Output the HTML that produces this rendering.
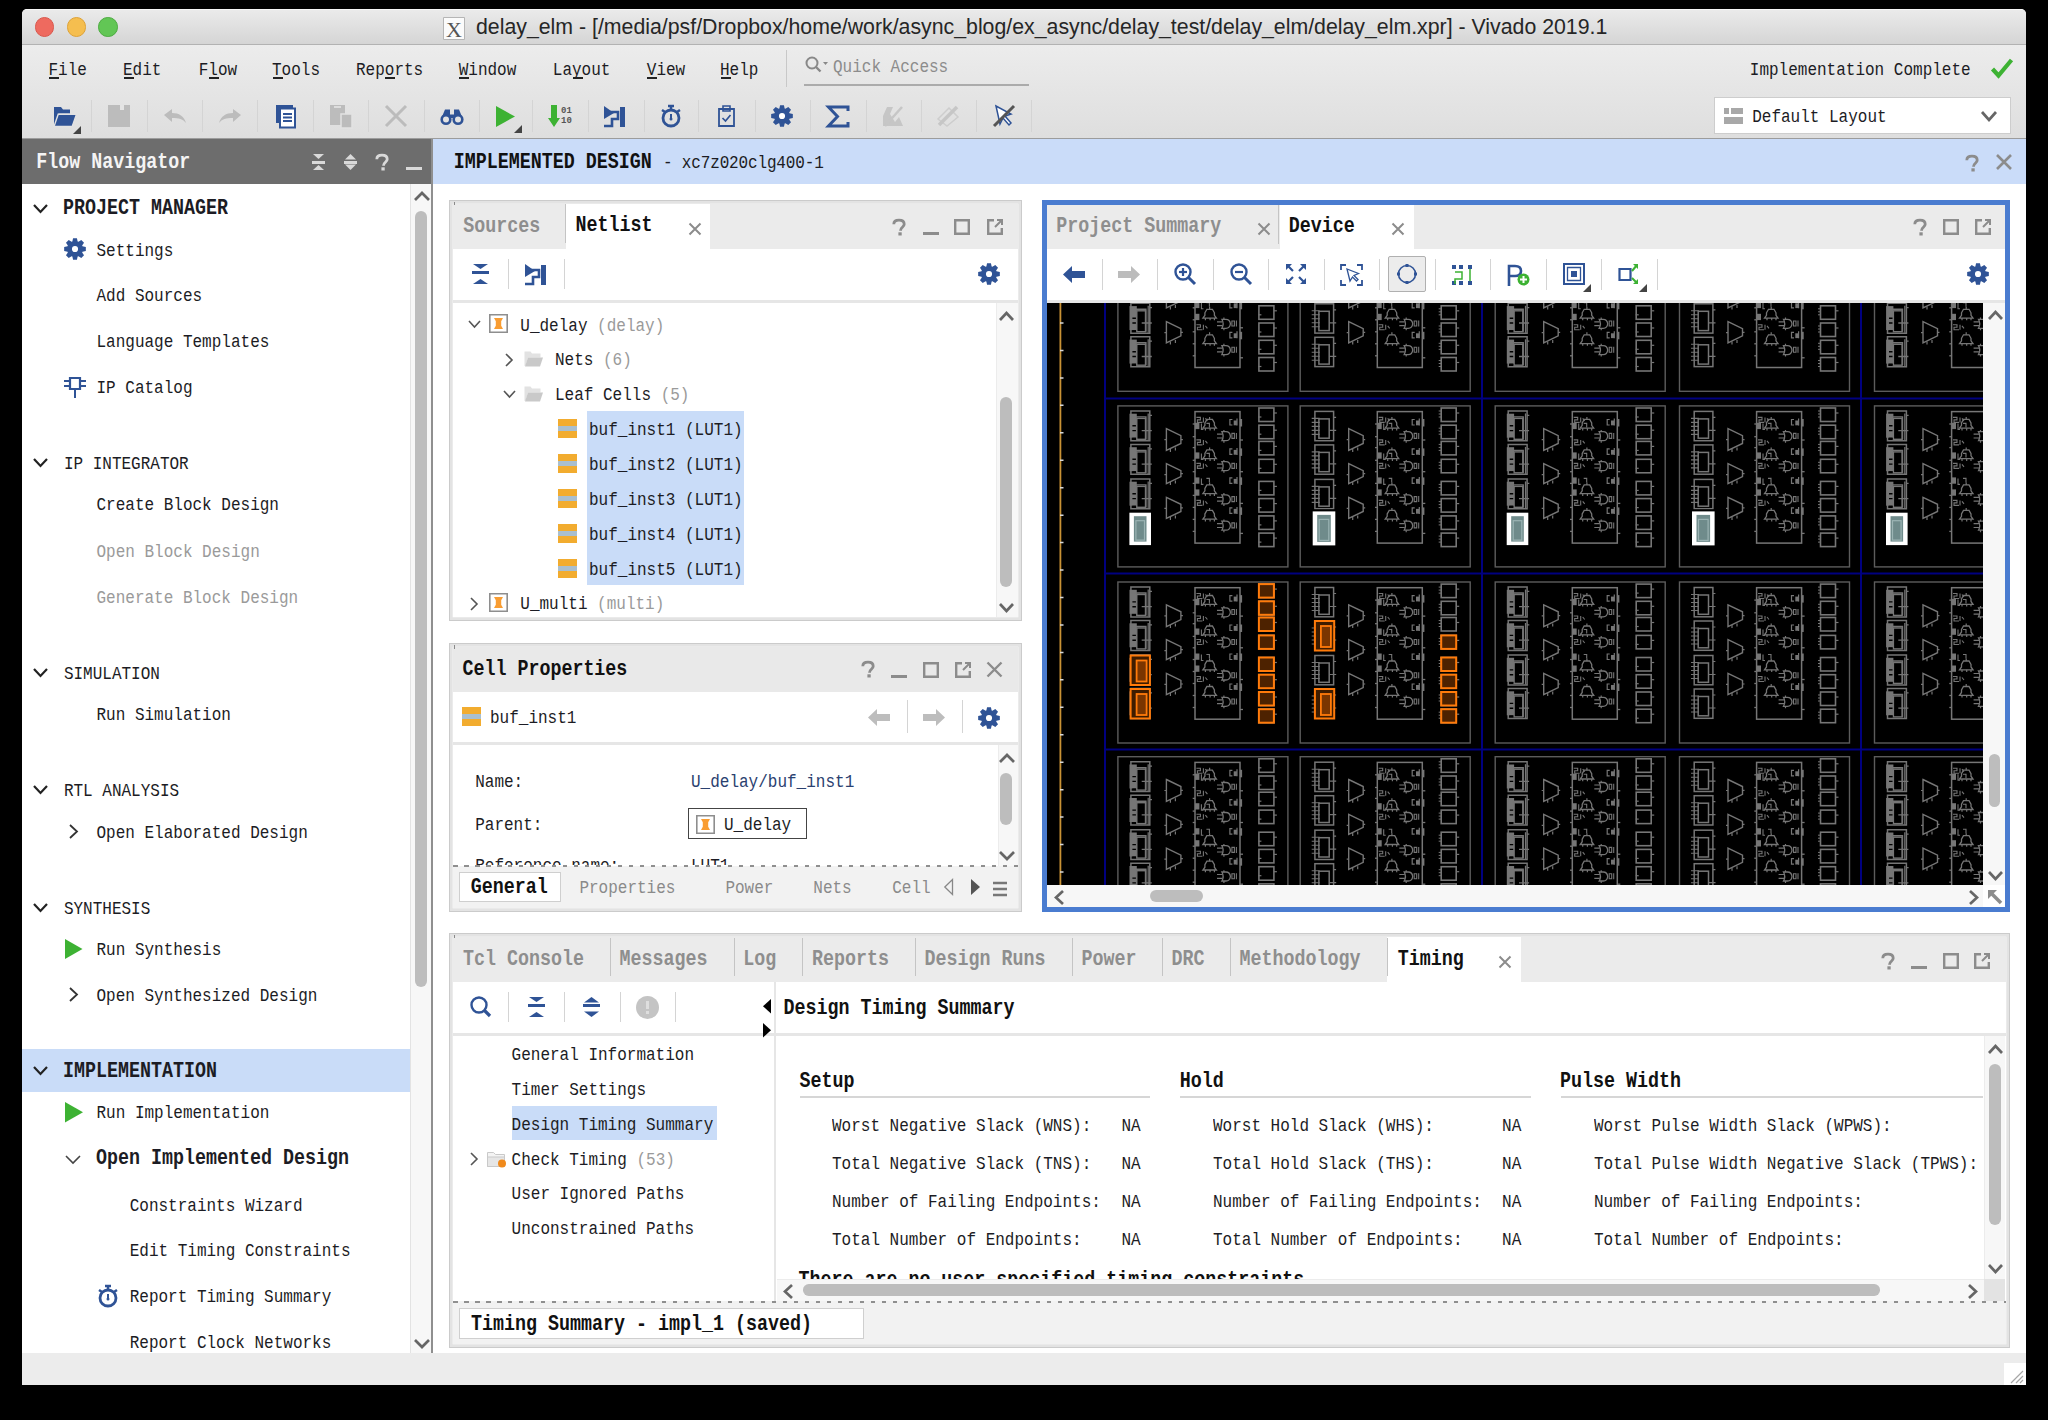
<!DOCTYPE html><html><head><meta charset="utf-8"><title>Vivado</title><style>
*{margin:0;padding:0;box-sizing:border-box}
html,body{width:2048px;height:1420px;overflow:hidden;background:#000}
body{position:relative}
div{position:absolute}
.t{white-space:pre;font-family:"Liberation Mono",monospace;font-size:16px;line-height:20px;transform:scaleY(1.2);transform-origin:0 14px}
.t.b{font-weight:bold;font-size:18.33px;transform:scaleY(1.18)}
svg{position:absolute;overflow:visible}
</style></head><body>
<div style="position:absolute;left:22px;top:9px;width:2004px;height:1376px;background:#ececec;border-radius:5px 5px 0 0"></div>
<div style="position:absolute;left:22px;top:9px;width:2004px;height:35px;background:linear-gradient(#ebebeb,#d5d5d5);border-radius:5px 5px 0 0"></div>
<div style="position:absolute;left:26px;top:9px;width:1996px;height:1px;background:#f6f6f6"></div>
<div style="position:absolute;left:22px;top:44px;width:2004px;height:1px;background:#b2b2b2"></div>
<div style="position:absolute;left:22px;top:45px;width:2004px;height:93px;background:linear-gradient(#ececec,#dedede)"></div>
<div style="position:absolute;left:22px;top:138px;width:2004px;height:1px;background:#9c9c9c"></div>
<div style="position:absolute;left:22px;top:139px;width:409px;height:45px;background:#6d6d6d"></div>
<div style="position:absolute;left:22px;top:184px;width:409px;height:1169px;background:#fff"></div>
<div style="position:absolute;left:410px;top:184px;width:21px;height:1169px;background:#f7f7f7;border-left:1px solid #e3e3e3"></div>
<div style="position:absolute;left:431px;top:139px;width:2px;height:1214px;background:#8f8f8f"></div>
<div style="position:absolute;left:433px;top:139px;width:1593px;height:45px;background:#cadcf9"></div>
<div style="position:absolute;left:433px;top:184px;width:1593px;height:1169px;background:#fff"></div>
<div style="position:absolute;left:22px;top:1353px;width:2004px;height:32px;background:#ececec"></div>
<div style="position:absolute;left:449px;top:200px;width:573px;height:421px;background:#fff;border:1.3px solid #cbcbcb;box-shadow:inset 0 0 0 2.7px #e3e3e3"></div>
<div style="position:absolute;left:453px;top:204px;width:565px;height:45px;background:#ebebeb"></div>
<div style="position:absolute;left:566px;top:204px;width:144px;height:45px;background:#fff"></div>
<div style="position:absolute;left:565px;top:204px;width:1px;height:39px;background:#c4c4c4"></div>
<div style="position:absolute;left:453px;top:300px;width:565px;height:3px;background:#e6e6e6"></div>
<div style="position:absolute;left:996px;top:303px;width:22px;height:314px;background:#f7f7f7;border-left:1px solid #ececec"></div>
<div style="position:absolute;left:587px;top:411px;width:157px;height:174px;background:#c9dcf8"></div>
<div style="position:absolute;left:449px;top:643px;width:573px;height:269px;background:#fff;border:1.3px solid #cbcbcb;box-shadow:inset 0 0 0 2.7px #e3e3e3"></div>
<div style="position:absolute;left:453px;top:647px;width:565px;height:45px;background:#e9e9e9"></div>
<div style="position:absolute;left:453px;top:742px;width:565px;height:3px;background:#e6e6e6"></div>
<div style="position:absolute;left:998px;top:745px;width:20px;height:121px;background:#f7f7f7;border-left:1px solid #ececec"></div>
<div style="position:absolute;left:453px;top:866px;width:565px;height:42px;background:#f2f2f2"></div>
<div style="position:absolute;left:453px;top:864.5px;width:565px;height:2px;background:repeating-linear-gradient(90deg,#8f8f8f 0 4.5px,transparent 4.5px 11px)"></div>
<div style="position:absolute;left:459px;top:872px;width:102px;height:30px;background:#fff;border:1px solid #cfcfcf"></div>
<div style="position:absolute;left:1042px;top:200px;width:968px;height:712px;background:#fff;border:5px solid #4a7cd0"></div>
<div style="position:absolute;left:1047px;top:205px;width:958px;height:44px;background:#ebebeb"></div>
<div style="position:absolute;left:1280px;top:205px;width:134px;height:44px;background:#fff"></div>
<div style="position:absolute;left:1278px;top:205px;width:1px;height:39px;background:#c4c4c4"></div>
<div style="position:absolute;left:1047px;top:300px;width:958px;height:3px;background:#e6e6e6"></div>
<div style="position:absolute;left:1047px;top:303px;width:936px;height:582px;background:#000"></div>
<svg style="left:1047px;top:303px;overflow:hidden" width="936" height="582" viewBox="1047 303 936 582"><defs><g id="tA"><rect x="0.5" y="0.5" width="170" height="161" fill="none" stroke="#5c5c5c" stroke-width="1.4"/><path d="M49 23.3L63.5 30.3V38.1L49 45.1z" fill="none" stroke="#767676" stroke-width="1.4"/><path d="M47 34.3h2M63.5 34.2h2M53 43.6v3M58 42.1v3" stroke="#767676" stroke-width="1.2"/><path d="M49 58.2L63.5 65.2V71.2L49 78.2z" fill="none" stroke="#767676" stroke-width="1.4"/><path d="M47 69.2h2M63.5 68.2h2M53 76.7v3M58 75.2v3" stroke="#767676" stroke-width="1.2"/><path d="M49 91.9L63.5 98.9V106.1L49 113.1z" fill="none" stroke="#767676" stroke-width="1.4"/><path d="M47 102.9h2M63.5 102.5h2M53 111.6v3M58 110.1v3" stroke="#767676" stroke-width="1.2"/><rect x="77.6" y="6.2" width="45" height="131.5" fill="none" stroke="#767676" stroke-width="1.5"/><path d="M75.3 18.6h2.5" stroke="#767676" stroke-width="1.3"/><path d="M75.3 31.3h2.5" stroke="#767676" stroke-width="1.3"/><path d="M75.3 42.2h2.5" stroke="#767676" stroke-width="1.3"/><path d="M75.3 54.9h2.5" stroke="#767676" stroke-width="1.3"/><path d="M75.3 66.3h2.5" stroke="#767676" stroke-width="1.3"/><path d="M75.3 78h2.5" stroke="#767676" stroke-width="1.3"/><path d="M75.3 90h2.5" stroke="#767676" stroke-width="1.3"/><path d="M75.3 102h2.5" stroke="#767676" stroke-width="1.3"/><path d="M75.3 114h2.5" stroke="#767676" stroke-width="1.3"/><path d="M75.3 126h2.5" stroke="#767676" stroke-width="1.3"/><path d="M122.6 34.6h3" stroke="#767676" stroke-width="1.3"/><path d="M122.6 66.3h3" stroke="#767676" stroke-width="1.3"/><path d="M122.6 98h3" stroke="#767676" stroke-width="1.3"/><path d="M122.6 128h3" stroke="#767676" stroke-width="1.3"/><path d="M85.5 22.8H99L97 20V17.5L95 14H89.5L87.5 17.5V20z" fill="none" stroke="#767676" stroke-width="1.3"/><path d="M92.2 11.5v2.5M88 22.8v2.2M92.7 22.8v2.2M97 22.8v2.2" stroke="#767676" stroke-width="1.2"/><path d="M85.5 53.3H99L97 50.5V48.0L95 44.5H89.5L87.5 48.0V50.5z" fill="none" stroke="#767676" stroke-width="1.3"/><path d="M92.2 42.0v2.5M88 53.3v2.2M92.7 53.3v2.2M97 53.3v2.2" stroke="#767676" stroke-width="1.2"/><path d="M85.5 88.3H99L97 85.5V83.0L95 79.5H89.5L87.5 83.0V85.5z" fill="none" stroke="#767676" stroke-width="1.3"/><path d="M92.2 77.0v2.5M88 88.3v2.2M92.7 88.3v2.2M97 88.3v2.2" stroke="#767676" stroke-width="1.2"/><path d="M85.5 113.8H99L97 111V108.5L95 105H89.5L87.5 108.5V111z" fill="none" stroke="#767676" stroke-width="1.3"/><path d="M92.2 102.5v2.5M88 113.8v2.2M92.7 113.8v2.2M97 113.8v2.2" stroke="#767676" stroke-width="1.2"/><path d="M104.5 26.3Q107 30.8 104.5 35.3H108.5Q112.5 35.3 113 30.8Q112.5 26.3 108.5 26.3z" fill="none" stroke="#767676" stroke-width="1.3"/><path d="M99.6 28.8h5.5M99.6 32.6h5.5M106.5 24.5v2M106.5 35.3v2" stroke="#767676" stroke-width="1.2"/><path d="M114.5 28.0h2.5v5h-2.5zM119 27.5v6" fill="none" stroke="#767676" stroke-width="1.1"/><path d="M104.5 56.3Q107 60.8 104.5 65.3H108.5Q112.5 65.3 113 60.8Q112.5 56.3 108.5 56.3z" fill="none" stroke="#767676" stroke-width="1.3"/><path d="M99.6 58.8h5.5M99.6 62.6h5.5M106.5 54.5v2M106.5 65.3v2" stroke="#767676" stroke-width="1.2"/><path d="M114.5 58.0h2.5v5h-2.5zM119 57.5v6" fill="none" stroke="#767676" stroke-width="1.1"/><path d="M104.5 89.5Q107 94.0 104.5 98.5H108.5Q112.5 98.5 113 94.0Q112.5 89.5 108.5 89.5z" fill="none" stroke="#767676" stroke-width="1.3"/><path d="M99.6 92.0h5.5M99.6 95.8h5.5M106.5 87.7v2M106.5 98.5v2" stroke="#767676" stroke-width="1.2"/><path d="M114.5 91.2h2.5v5h-2.5zM119 90.7v6" fill="none" stroke="#767676" stroke-width="1.1"/><path d="M104.5 115.8Q107 120.3 104.5 124.8H108.5Q112.5 124.8 113 120.3Q112.5 115.8 108.5 115.8z" fill="none" stroke="#767676" stroke-width="1.3"/><path d="M99.6 118.3h5.5M99.6 122.1h5.5M106.5 114v2M106.5 124.8v2" stroke="#767676" stroke-width="1.2"/><path d="M114.5 117.5h2.5v5h-2.5zM119 117v6" fill="none" stroke="#767676" stroke-width="1.1"/><path d="M115 14.1h-2.5v5.5h2.5" fill="none" stroke="#767676" stroke-width="1.2"/><rect x="116.3" y="15.1" width="3.2" height="4.8" fill="#767676"/><path d="M119.6 13.1v7" stroke="#767676" stroke-width="1.2"/><rect x="122.5" y="13.6" width="2.2" height="7.5" fill="#767676"/><path d="M115 43.5h-2.5v5.5h2.5" fill="none" stroke="#767676" stroke-width="1.2"/><rect x="116.3" y="44.5" width="3.2" height="4.8" fill="#767676"/><path d="M119.6 42.5v7" stroke="#767676" stroke-width="1.2"/><rect x="122.5" y="43" width="2.2" height="7.5" fill="#767676"/><path d="M115 72.5h-2.5v5.5h2.5" fill="none" stroke="#767676" stroke-width="1.2"/><rect x="116.3" y="73.5" width="3.2" height="4.8" fill="#767676"/><path d="M119.6 71.5v7" stroke="#767676" stroke-width="1.2"/><rect x="122.5" y="72" width="2.2" height="7.5" fill="#767676"/><path d="M115 102.5h-2.5v5.5h2.5" fill="none" stroke="#767676" stroke-width="1.2"/><rect x="116.3" y="103.5" width="3.2" height="4.8" fill="#767676"/><path d="M119.6 101.5v7" stroke="#767676" stroke-width="1.2"/><rect x="122.5" y="102" width="2.2" height="7.5" fill="#767676"/><rect x="77.6" y="17.4" width="4.4" height="6.3" fill="#767676"/><rect x="77.6" y="47" width="4.4" height="6.3" fill="#767676"/><rect x="77.6" y="72" width="4.4" height="6.3" fill="#767676"/><rect x="77.6" y="84" width="4.4" height="6.3" fill="#767676"/><path d="M79 12h4v2.5h-3v2.5h5M86 12v5M88 13l2 2.5" fill="none" stroke="#767676" stroke-width="1.1"/><path d="M79 34.5h4v2.5h-3v2.5h5M86 34.5v5M88 35.5l2 2.5" fill="none" stroke="#767676" stroke-width="1.1"/><path d="M79 58h4v2.5h-3v2.5h5M86 58v5M88 59l2 2.5" fill="none" stroke="#767676" stroke-width="1.1"/><path d="M79 95h4v2.5h-3v2.5h5M86 95v5M88 96l2 2.5" fill="none" stroke="#767676" stroke-width="1.1"/><path d="M84 18v6h2M89 18h3v4" fill="none" stroke="#767676" stroke-width="1.1"/><path d="M84 48v6h2M89 48h3v4" fill="none" stroke="#767676" stroke-width="1.1"/><path d="M84 73v6h2M89 73h3v4" fill="none" stroke="#767676" stroke-width="1.1"/><path d="M13.5 5.5H32.4V35.4H13.5z" fill="none" stroke="#767676" stroke-width="1.5"/><rect x="12.1" y="8.3" width="7.3" height="24" fill="#767676"/><path d="M14 11.5H28.5V34.0" fill="none" stroke="#767676" stroke-width="1.4"/><rect x="19.4" y="13.0" width="8.7" height="20.9" fill="none" stroke="#767676" stroke-width="1.4"/><path d="M30.8 8.0V35.0" stroke="#767676" stroke-width="1.2"/><path d="M15 20.4h3.5M15 25.2h3.5M15 33.1h3.5" stroke="#000" stroke-width="1.4"/><path d="M32.4 9.9h2.2M24.3 25.2h10.1" stroke="#767676" stroke-width="1.3"/><path d="M13.5 39.0H32.4V68.9H13.5z" fill="none" stroke="#767676" stroke-width="1.5"/><rect x="12.1" y="41.8" width="7.3" height="24" fill="#767676"/><path d="M14 45.0H28.5V67.5" fill="none" stroke="#767676" stroke-width="1.4"/><rect x="19.4" y="46.5" width="8.7" height="20.9" fill="none" stroke="#767676" stroke-width="1.4"/><path d="M30.8 41.5V68.5" stroke="#767676" stroke-width="1.2"/><path d="M15 53.9h3.5M15 58.7h3.5M15 66.6h3.5" stroke="#000" stroke-width="1.4"/><path d="M32.4 43.4h2.2M24.3 58.7h10.1" stroke="#767676" stroke-width="1.3"/><path d="M13.5 73.5H32.4V103.4H13.5z" fill="none" stroke="#767676" stroke-width="1.5"/><rect x="12.1" y="76.3" width="7.3" height="24" fill="#767676"/><path d="M14 79.5H28.5V102.0" fill="none" stroke="#767676" stroke-width="1.4"/><rect x="19.4" y="81.0" width="8.7" height="20.9" fill="none" stroke="#767676" stroke-width="1.4"/><path d="M30.8 76.0V103.0" stroke="#767676" stroke-width="1.2"/><path d="M15 88.4h3.5M15 93.2h3.5M15 101.1h3.5" stroke="#000" stroke-width="1.4"/><path d="M32.4 77.9h2.2M24.3 93.2h10.1" stroke="#767676" stroke-width="1.3"/><path d="M13.5 107.0H32.4V136.9H13.5z" fill="none" stroke="#767676" stroke-width="1.5"/><rect x="12.1" y="109.8" width="7.3" height="24" fill="#767676"/><path d="M14 113.0H28.5V135.5" fill="none" stroke="#767676" stroke-width="1.4"/><rect x="19.4" y="114.5" width="8.7" height="20.9" fill="none" stroke="#767676" stroke-width="1.4"/><path d="M30.8 109.5V136.5" stroke="#767676" stroke-width="1.2"/><path d="M15 121.9h3.5M15 126.7h3.5M15 134.6h3.5" stroke="#000" stroke-width="1.4"/><path d="M32.4 111.4h2.2M24.3 126.7h10.1" stroke="#767676" stroke-width="1.3"/><rect x="141.5" y="2.6" width="15" height="13.5" fill="none" stroke="#767676" stroke-width="1.6"/><path d="M156.5 7.6h3" stroke="#767676" stroke-width="1.2"/><path d="M141 11.6h3" stroke="#767676" stroke-width="1.2"/><rect x="141.5" y="19.8" width="15" height="13.5" fill="none" stroke="#767676" stroke-width="1.6"/><path d="M156.5 24.8h3" stroke="#767676" stroke-width="1.2"/><path d="M141 28.8h3" stroke="#767676" stroke-width="1.2"/><rect x="141.5" y="36" width="15" height="13.5" fill="none" stroke="#767676" stroke-width="1.6"/><path d="M156.5 41h3" stroke="#767676" stroke-width="1.2"/><path d="M141 45h3" stroke="#767676" stroke-width="1.2"/><rect x="141.5" y="53.9" width="15" height="13.5" fill="none" stroke="#767676" stroke-width="1.6"/><path d="M156.5 58.9h3" stroke="#767676" stroke-width="1.2"/><path d="M141 62.9h3" stroke="#767676" stroke-width="1.2"/><rect x="141.5" y="76" width="15" height="13.5" fill="none" stroke="#767676" stroke-width="1.6"/><path d="M156.5 81h3" stroke="#767676" stroke-width="1.2"/><path d="M141 85h3" stroke="#767676" stroke-width="1.2"/><rect x="141.5" y="93.2" width="15" height="13.5" fill="none" stroke="#767676" stroke-width="1.6"/><path d="M156.5 98.2h3" stroke="#767676" stroke-width="1.2"/><path d="M141 102.2h3" stroke="#767676" stroke-width="1.2"/><rect x="141.5" y="110.5" width="15" height="13.5" fill="none" stroke="#767676" stroke-width="1.6"/><path d="M156.5 115.5h3" stroke="#767676" stroke-width="1.2"/><path d="M141 119.5h3" stroke="#767676" stroke-width="1.2"/><rect x="141.5" y="127.7" width="15" height="13.5" fill="none" stroke="#767676" stroke-width="1.6"/><path d="M156.5 132.7h3" stroke="#767676" stroke-width="1.2"/><path d="M141 136.7h3" stroke="#767676" stroke-width="1.2"/></g><g id="tB"><rect x="0.5" y="0.5" width="170" height="161" fill="none" stroke="#5c5c5c" stroke-width="1.4"/><path d="M49 23.3L63.5 30.3V38.1L49 45.1z" fill="none" stroke="#767676" stroke-width="1.4"/><path d="M47 34.3h2M63.5 34.2h2M53 43.6v3M58 42.1v3" stroke="#767676" stroke-width="1.2"/><path d="M49 58.2L63.5 65.2V71.2L49 78.2z" fill="none" stroke="#767676" stroke-width="1.4"/><path d="M47 69.2h2M63.5 68.2h2M53 76.7v3M58 75.2v3" stroke="#767676" stroke-width="1.2"/><path d="M49 91.9L63.5 98.9V106.1L49 113.1z" fill="none" stroke="#767676" stroke-width="1.4"/><path d="M47 102.9h2M63.5 102.5h2M53 111.6v3M58 110.1v3" stroke="#767676" stroke-width="1.2"/><rect x="77.6" y="6.2" width="45" height="131.5" fill="none" stroke="#767676" stroke-width="1.5"/><path d="M75.3 18.6h2.5" stroke="#767676" stroke-width="1.3"/><path d="M75.3 31.3h2.5" stroke="#767676" stroke-width="1.3"/><path d="M75.3 42.2h2.5" stroke="#767676" stroke-width="1.3"/><path d="M75.3 54.9h2.5" stroke="#767676" stroke-width="1.3"/><path d="M75.3 66.3h2.5" stroke="#767676" stroke-width="1.3"/><path d="M75.3 78h2.5" stroke="#767676" stroke-width="1.3"/><path d="M75.3 90h2.5" stroke="#767676" stroke-width="1.3"/><path d="M75.3 102h2.5" stroke="#767676" stroke-width="1.3"/><path d="M75.3 114h2.5" stroke="#767676" stroke-width="1.3"/><path d="M75.3 126h2.5" stroke="#767676" stroke-width="1.3"/><path d="M122.6 34.6h3" stroke="#767676" stroke-width="1.3"/><path d="M122.6 66.3h3" stroke="#767676" stroke-width="1.3"/><path d="M122.6 98h3" stroke="#767676" stroke-width="1.3"/><path d="M122.6 128h3" stroke="#767676" stroke-width="1.3"/><path d="M85.5 22.8H99L97 20V17.5L95 14H89.5L87.5 17.5V20z" fill="none" stroke="#767676" stroke-width="1.3"/><path d="M92.2 11.5v2.5M88 22.8v2.2M92.7 22.8v2.2M97 22.8v2.2" stroke="#767676" stroke-width="1.2"/><path d="M85.5 53.3H99L97 50.5V48.0L95 44.5H89.5L87.5 48.0V50.5z" fill="none" stroke="#767676" stroke-width="1.3"/><path d="M92.2 42.0v2.5M88 53.3v2.2M92.7 53.3v2.2M97 53.3v2.2" stroke="#767676" stroke-width="1.2"/><path d="M85.5 88.3H99L97 85.5V83.0L95 79.5H89.5L87.5 83.0V85.5z" fill="none" stroke="#767676" stroke-width="1.3"/><path d="M92.2 77.0v2.5M88 88.3v2.2M92.7 88.3v2.2M97 88.3v2.2" stroke="#767676" stroke-width="1.2"/><path d="M85.5 113.8H99L97 111V108.5L95 105H89.5L87.5 108.5V111z" fill="none" stroke="#767676" stroke-width="1.3"/><path d="M92.2 102.5v2.5M88 113.8v2.2M92.7 113.8v2.2M97 113.8v2.2" stroke="#767676" stroke-width="1.2"/><path d="M104.5 26.3Q107 30.8 104.5 35.3H108.5Q112.5 35.3 113 30.8Q112.5 26.3 108.5 26.3z" fill="none" stroke="#767676" stroke-width="1.3"/><path d="M99.6 28.8h5.5M99.6 32.6h5.5M106.5 24.5v2M106.5 35.3v2" stroke="#767676" stroke-width="1.2"/><path d="M114.5 28.0h2.5v5h-2.5zM119 27.5v6" fill="none" stroke="#767676" stroke-width="1.1"/><path d="M104.5 56.3Q107 60.8 104.5 65.3H108.5Q112.5 65.3 113 60.8Q112.5 56.3 108.5 56.3z" fill="none" stroke="#767676" stroke-width="1.3"/><path d="M99.6 58.8h5.5M99.6 62.6h5.5M106.5 54.5v2M106.5 65.3v2" stroke="#767676" stroke-width="1.2"/><path d="M114.5 58.0h2.5v5h-2.5zM119 57.5v6" fill="none" stroke="#767676" stroke-width="1.1"/><path d="M104.5 89.5Q107 94.0 104.5 98.5H108.5Q112.5 98.5 113 94.0Q112.5 89.5 108.5 89.5z" fill="none" stroke="#767676" stroke-width="1.3"/><path d="M99.6 92.0h5.5M99.6 95.8h5.5M106.5 87.7v2M106.5 98.5v2" stroke="#767676" stroke-width="1.2"/><path d="M114.5 91.2h2.5v5h-2.5zM119 90.7v6" fill="none" stroke="#767676" stroke-width="1.1"/><path d="M104.5 115.8Q107 120.3 104.5 124.8H108.5Q112.5 124.8 113 120.3Q112.5 115.8 108.5 115.8z" fill="none" stroke="#767676" stroke-width="1.3"/><path d="M99.6 118.3h5.5M99.6 122.1h5.5M106.5 114v2M106.5 124.8v2" stroke="#767676" stroke-width="1.2"/><path d="M114.5 117.5h2.5v5h-2.5zM119 117v6" fill="none" stroke="#767676" stroke-width="1.1"/><path d="M115 14.1h-2.5v5.5h2.5" fill="none" stroke="#767676" stroke-width="1.2"/><rect x="116.3" y="15.1" width="3.2" height="4.8" fill="#767676"/><path d="M119.6 13.1v7" stroke="#767676" stroke-width="1.2"/><rect x="122.5" y="13.6" width="2.2" height="7.5" fill="#767676"/><path d="M115 43.5h-2.5v5.5h2.5" fill="none" stroke="#767676" stroke-width="1.2"/><rect x="116.3" y="44.5" width="3.2" height="4.8" fill="#767676"/><path d="M119.6 42.5v7" stroke="#767676" stroke-width="1.2"/><rect x="122.5" y="43" width="2.2" height="7.5" fill="#767676"/><path d="M115 72.5h-2.5v5.5h2.5" fill="none" stroke="#767676" stroke-width="1.2"/><rect x="116.3" y="73.5" width="3.2" height="4.8" fill="#767676"/><path d="M119.6 71.5v7" stroke="#767676" stroke-width="1.2"/><rect x="122.5" y="72" width="2.2" height="7.5" fill="#767676"/><path d="M115 102.5h-2.5v5.5h2.5" fill="none" stroke="#767676" stroke-width="1.2"/><rect x="116.3" y="103.5" width="3.2" height="4.8" fill="#767676"/><path d="M119.6 101.5v7" stroke="#767676" stroke-width="1.2"/><rect x="122.5" y="102" width="2.2" height="7.5" fill="#767676"/><rect x="77.6" y="17.4" width="4.4" height="6.3" fill="#767676"/><rect x="77.6" y="47" width="4.4" height="6.3" fill="#767676"/><rect x="77.6" y="72" width="4.4" height="6.3" fill="#767676"/><rect x="77.6" y="84" width="4.4" height="6.3" fill="#767676"/><path d="M79 12h4v2.5h-3v2.5h5M86 12v5M88 13l2 2.5" fill="none" stroke="#767676" stroke-width="1.1"/><path d="M79 34.5h4v2.5h-3v2.5h5M86 34.5v5M88 35.5l2 2.5" fill="none" stroke="#767676" stroke-width="1.1"/><path d="M79 58h4v2.5h-3v2.5h5M86 58v5M88 59l2 2.5" fill="none" stroke="#767676" stroke-width="1.1"/><path d="M79 95h4v2.5h-3v2.5h5M86 95v5M88 96l2 2.5" fill="none" stroke="#767676" stroke-width="1.1"/><path d="M84 18v6h2M89 18h3v4" fill="none" stroke="#767676" stroke-width="1.1"/><path d="M84 48v6h2M89 48h3v4" fill="none" stroke="#767676" stroke-width="1.1"/><path d="M84 73v6h2M89 73h3v4" fill="none" stroke="#767676" stroke-width="1.1"/><rect x="15.2" y="6" width="18.7" height="29.3" fill="none" stroke="#767676" stroke-width="1.5"/><rect x="19.2" y="13.5" width="10.3" height="19.3" fill="none" stroke="#767676" stroke-width="1.5"/><path d="M12 13h8M12 17h8M12 21h8M12 25h8M12 29h8" stroke="#767676" stroke-width="1.1"/><path d="M33.9 12h2.5M29.5 25h7" stroke="#767676" stroke-width="1.2"/><rect x="15.2" y="39.5" width="18.7" height="29.3" fill="none" stroke="#767676" stroke-width="1.5"/><rect x="19.2" y="47.0" width="10.3" height="19.3" fill="none" stroke="#767676" stroke-width="1.5"/><path d="M12 46.5h8M12 50.5h8M12 54.5h8M12 58.5h8M12 62.5h8" stroke="#767676" stroke-width="1.1"/><path d="M33.9 45.5h2.5M29.5 58.5h7" stroke="#767676" stroke-width="1.2"/><rect x="15.2" y="74" width="18.7" height="29.3" fill="none" stroke="#767676" stroke-width="1.5"/><rect x="19.2" y="81.5" width="10.3" height="19.3" fill="none" stroke="#767676" stroke-width="1.5"/><path d="M12 81h8M12 85h8M12 89h8M12 93h8M12 97h8" stroke="#767676" stroke-width="1.1"/><path d="M33.9 80h2.5M29.5 93h7" stroke="#767676" stroke-width="1.2"/><rect x="15.2" y="107.5" width="18.7" height="29.3" fill="none" stroke="#767676" stroke-width="1.5"/><rect x="19.2" y="115.0" width="10.3" height="19.3" fill="none" stroke="#767676" stroke-width="1.5"/><path d="M12 114.5h8M12 118.5h8M12 122.5h8M12 126.5h8M12 130.5h8" stroke="#767676" stroke-width="1.1"/><path d="M33.9 113.5h2.5M29.5 126.5h7" stroke="#767676" stroke-width="1.2"/><rect x="141.5" y="2.6" width="15" height="13.5" fill="none" stroke="#767676" stroke-width="1.6"/><path d="M156.5 7.6h3" stroke="#767676" stroke-width="1.2"/><path d="M139 5.6h3M139 8.6h3M139 11.6h3" stroke="#767676" stroke-width="1"/><rect x="141.5" y="19.8" width="15" height="13.5" fill="none" stroke="#767676" stroke-width="1.6"/><path d="M156.5 24.8h3" stroke="#767676" stroke-width="1.2"/><path d="M139 22.8h3M139 25.8h3M139 28.8h3" stroke="#767676" stroke-width="1"/><rect x="141.5" y="36" width="15" height="13.5" fill="none" stroke="#767676" stroke-width="1.6"/><path d="M156.5 41h3" stroke="#767676" stroke-width="1.2"/><path d="M139 39h3M139 42h3M139 45h3" stroke="#767676" stroke-width="1"/><rect x="141.5" y="53.9" width="15" height="13.5" fill="none" stroke="#767676" stroke-width="1.6"/><path d="M156.5 58.9h3" stroke="#767676" stroke-width="1.2"/><path d="M139 56.9h3M139 59.9h3M139 62.9h3" stroke="#767676" stroke-width="1"/><rect x="141.5" y="76" width="15" height="13.5" fill="none" stroke="#767676" stroke-width="1.6"/><path d="M156.5 81h3" stroke="#767676" stroke-width="1.2"/><path d="M139 79h3M139 82h3M139 85h3" stroke="#767676" stroke-width="1"/><rect x="141.5" y="93.2" width="15" height="13.5" fill="none" stroke="#767676" stroke-width="1.6"/><path d="M156.5 98.2h3" stroke="#767676" stroke-width="1.2"/><path d="M139 96.2h3M139 99.2h3M139 102.2h3" stroke="#767676" stroke-width="1"/><rect x="141.5" y="110.5" width="15" height="13.5" fill="none" stroke="#767676" stroke-width="1.6"/><path d="M156.5 115.5h3" stroke="#767676" stroke-width="1.2"/><path d="M139 113.5h3M139 116.5h3M139 119.5h3" stroke="#767676" stroke-width="1"/><rect x="141.5" y="127.7" width="15" height="13.5" fill="none" stroke="#767676" stroke-width="1.6"/><path d="M156.5 132.7h3" stroke="#767676" stroke-width="1.2"/><path d="M139 130.7h3M139 133.7h3M139 136.7h3" stroke="#767676" stroke-width="1"/></g></defs><rect x="1047" y="303" width="936" height="582" fill="#000"/><path d="M1060.4 303V885" stroke="#c99235" stroke-width="1.8"/><path d="M1060 323.0h3.5M1060 350.45h3.5M1060 377.9h3.5M1060 405.35h3.5M1060 432.8h3.5M1060 460.25h3.5M1060 487.7h3.5M1060 515.15h3.5M1060 542.6h3.5M1060 570.05h3.5M1060 597.5h3.5M1060 624.95h3.5M1060 652.4h3.5M1060 679.8499999999999h3.5M1060 707.3h3.5M1060 734.75h3.5M1060 762.2h3.5M1060 789.65h3.5M1060 817.0999999999999h3.5M1060 844.55h3.5M1060 872.0h3.5M1060 899.4499999999999h3.5" stroke="#d8d8d8" stroke-width="1.5"/><path d="M1105 303V885" stroke="#000080" stroke-width="2"/><path d="M1482 303V885" stroke="#000080" stroke-width="2"/><path d="M1861 303V885" stroke="#000080" stroke-width="2"/><path d="M1105 222.5H1983" stroke="#000080" stroke-width="2"/><path d="M1105 398.5H1983" stroke="#000080" stroke-width="2"/><path d="M1105 573.5H1983" stroke="#000080" stroke-width="2"/><path d="M1105 749.5H1983" stroke="#000080" stroke-width="2"/><use href="#tA" x="1117.4" y="229.8"/><use href="#tA" x="1494.7" y="229.8"/><use href="#tA" x="1874" y="229.8"/><use href="#tB" x="1299.7" y="229.8"/><use href="#tB" x="1679" y="229.8"/><use href="#tA" x="1117.4" y="405.4"/><use href="#tA" x="1494.7" y="405.4"/><use href="#tA" x="1874" y="405.4"/><use href="#tB" x="1299.7" y="405.4"/><use href="#tB" x="1679" y="405.4"/><use href="#tA" x="1117.4" y="581.5"/><use href="#tA" x="1494.7" y="581.5"/><use href="#tA" x="1874" y="581.5"/><use href="#tB" x="1299.7" y="581.5"/><use href="#tB" x="1679" y="581.5"/><use href="#tA" x="1117.4" y="756.2"/><use href="#tA" x="1494.7" y="756.2"/><use href="#tA" x="1874" y="756.2"/><use href="#tB" x="1299.7" y="756.2"/><use href="#tB" x="1679" y="756.2"/><g transform="translate(1117.4 405.4)"><rect x="11" y="105" width="25" height="36" fill="#000"/><rect x="12" y="107.3" width="21.6" height="32.4" fill="#fff"/><rect x="16.5" y="110.8" width="12.600000000000001" height="25.4" fill="#6f8b8b"/><rect x="18.5" y="115.3" width="8.600000000000001" height="19.4" fill="none" stroke="#9cb4b4" stroke-width="1.2"/></g><g transform="translate(1494.7 405.4)"><rect x="11" y="105" width="25" height="36" fill="#000"/><rect x="12" y="107.3" width="21.6" height="32.4" fill="#fff"/><rect x="16.5" y="110.8" width="12.600000000000001" height="25.4" fill="#6f8b8b"/><rect x="18.5" y="115.3" width="8.600000000000001" height="19.4" fill="none" stroke="#9cb4b4" stroke-width="1.2"/></g><g transform="translate(1874 405.4)"><rect x="11" y="105" width="25" height="36" fill="#000"/><rect x="12" y="107.3" width="21.6" height="32.4" fill="#fff"/><rect x="16.5" y="110.8" width="12.600000000000001" height="25.4" fill="#6f8b8b"/><rect x="18.5" y="115.3" width="8.600000000000001" height="19.4" fill="none" stroke="#9cb4b4" stroke-width="1.2"/></g><g transform="translate(1299.7 405.4)"><rect x="10" y="104" width="27" height="38" fill="#000"/><rect x="13" y="106" width="22.6" height="34" fill="#fff"/><rect x="17.5" y="109.5" width="13.600000000000001" height="27" fill="#6f8b8b"/><rect x="19.5" y="114" width="9.600000000000001" height="21" fill="none" stroke="#9cb4b4" stroke-width="1.2"/></g><g transform="translate(1679 405.4)"><rect x="10" y="104" width="27" height="38" fill="#000"/><rect x="13" y="106" width="22.6" height="34" fill="#fff"/><rect x="17.5" y="109.5" width="13.600000000000001" height="27" fill="#6f8b8b"/><rect x="19.5" y="114" width="9.600000000000001" height="21" fill="none" stroke="#9cb4b4" stroke-width="1.2"/></g><g transform="translate(1117.4 581.5)"><rect x="13.2" y="74" width="19.3" height="29.5" fill="#3e1c00" stroke="#ff7b0a" stroke-width="2"/><rect x="19.2" y="79" width="10" height="21" fill="#7a3500" stroke="#ff7b0a" stroke-width="1.8"/><rect x="13.2" y="107.5" width="19.3" height="29.5" fill="#3e1c00" stroke="#ff7b0a" stroke-width="2"/><rect x="19.2" y="112.5" width="10" height="21" fill="#7a3500" stroke="#ff7b0a" stroke-width="1.8"/><rect x="141.5" y="2.6" width="15" height="13.5" fill="#4d2200" stroke="#ff7b0a" stroke-width="2"/><rect x="141.5" y="19.8" width="15" height="13.5" fill="#4d2200" stroke="#ff7b0a" stroke-width="2"/><rect x="141.5" y="36" width="15" height="13.5" fill="#4d2200" stroke="#ff7b0a" stroke-width="2"/><rect x="141.5" y="53.9" width="15" height="13.5" fill="#4d2200" stroke="#ff7b0a" stroke-width="2"/><rect x="141.5" y="76" width="15" height="13.5" fill="#4d2200" stroke="#ff7b0a" stroke-width="2"/><rect x="141.5" y="93.2" width="15" height="13.5" fill="#4d2200" stroke="#ff7b0a" stroke-width="2"/><rect x="141.5" y="110.5" width="15" height="13.5" fill="#4d2200" stroke="#ff7b0a" stroke-width="2"/><rect x="141.5" y="127.7" width="15" height="13.5" fill="#4d2200" stroke="#ff7b0a" stroke-width="2"/></g><g transform="translate(1299.7 581.5)"><rect x="15.2" y="39.5" width="19.3" height="29.5" fill="#3e1c00" stroke="#ff7b0a" stroke-width="2"/><rect x="21.2" y="44.5" width="10" height="21" fill="#7a3500" stroke="#ff7b0a" stroke-width="1.8"/><rect x="15.2" y="107.5" width="19.3" height="29.5" fill="#3e1c00" stroke="#ff7b0a" stroke-width="2"/><rect x="21.2" y="112.5" width="10" height="21" fill="#7a3500" stroke="#ff7b0a" stroke-width="1.8"/><rect x="141.5" y="53.9" width="15" height="13.5" fill="#4d2200" stroke="#ff7b0a" stroke-width="2"/><rect x="141.5" y="76" width="15" height="13.5" fill="#4d2200" stroke="#ff7b0a" stroke-width="2"/><rect x="141.5" y="93.2" width="15" height="13.5" fill="#4d2200" stroke="#ff7b0a" stroke-width="2"/><rect x="141.5" y="110.5" width="15" height="13.5" fill="#4d2200" stroke="#ff7b0a" stroke-width="2"/><rect x="141.5" y="127.7" width="15" height="13.5" fill="#4d2200" stroke="#ff7b0a" stroke-width="2"/></g></svg>
<div style="position:absolute;left:1983px;top:303px;width:22px;height:582px;background:#f7f7f7"></div>
<div style="position:absolute;left:1047px;top:885px;width:936px;height:22px;background:#f7f7f7"></div>
<div style="position:absolute;left:449px;top:933px;width:1561px;height:415px;background:#fff;border:1.3px solid #cbcbcb;box-shadow:inset 0 0 0 2.7px #e3e3e3"></div>
<div style="position:absolute;left:453px;top:937px;width:1553px;height:45px;background:#ebebeb"></div>
<div style="position:absolute;left:1387px;top:937px;width:134px;height:45px;background:#fff"></div>
<div style="position:absolute;left:609.5px;top:938px;width:1px;height:38px;background:#c4c4c4"></div>
<div style="position:absolute;left:733.5px;top:938px;width:1px;height:38px;background:#c4c4c4"></div>
<div style="position:absolute;left:801.5px;top:938px;width:1px;height:38px;background:#c4c4c4"></div>
<div style="position:absolute;left:915px;top:938px;width:1px;height:38px;background:#c4c4c4"></div>
<div style="position:absolute;left:1071.5px;top:938px;width:1px;height:38px;background:#c4c4c4"></div>
<div style="position:absolute;left:1162px;top:938px;width:1px;height:38px;background:#c4c4c4"></div>
<div style="position:absolute;left:1230px;top:938px;width:1px;height:38px;background:#c4c4c4"></div>
<div style="position:absolute;left:1387px;top:938px;width:1px;height:38px;background:#c4c4c4"></div>
<div style="position:absolute;left:453px;top:1033px;width:322px;height:3px;background:#e6e6e6"></div>
<div style="position:absolute;left:774px;top:982px;width:2px;height:320px;background:#e6e6e6"></div>
<div style="position:absolute;left:776px;top:1033px;width:1230px;height:3px;background:#e6e6e6"></div>
<div style="position:absolute;left:453px;top:1301px;width:1553px;height:43px;background:#f2f2f2"></div>
<div style="position:absolute;left:453px;top:1301px;width:1553px;height:2px;background:repeating-linear-gradient(90deg,#8f8f8f 0 4.5px,transparent 4.5px 11px)"></div>
<div style="position:absolute;left:459px;top:1308px;width:405px;height:31px;background:#fff;border:1px solid #cfcfcf"></div>
<div style="position:absolute;left:1984px;top:1036px;width:21px;height:244px;background:#f7f7f7;border-left:1px solid #ececec"></div>
<div style="position:absolute;left:777px;top:1279px;width:1228px;height:22px;background:#f7f7f7;border-top:1px solid #ececec"></div>
<div style="position:absolute;left:1984px;top:1279px;width:21px;height:22px;background:#e3e3e3"></div>
<div style="position:absolute;left:1022px;top:1111px;width:0px;height:0px;"></div>
<div style="position:absolute;left:1179px;top:0px;width:0px;height:0px;"></div>
<div style="position:absolute;left:800px;top:1096px;width:350px;height:2px;background:#d6d6d6"></div>
<div style="position:absolute;left:1180px;top:1096px;width:351px;height:2px;background:#d6d6d6"></div>
<div style="position:absolute;left:1561px;top:1096px;width:422px;height:2px;background:#d6d6d6"></div>
<div style="position:absolute;left:512px;top:1106px;width:205px;height:34px;background:#c9dcf8"></div>
<div style="position:absolute;left:454px;top:201.5px;width:1px;height:3.5px;background:#8a8a8a"></div>
<div style="position:absolute;left:454px;top:645px;width:1px;height:3.5px;background:#8a8a8a"></div>
<div style="position:absolute;left:454px;top:934.5px;width:1px;height:3.5px;background:#8a8a8a"></div>
<div style="position:absolute;left:1713.5px;top:97px;width:297px;height:37px;background:#fff;border:1px solid #cdcdcd"></div>
<div style="position:absolute;left:687.7px;top:808.3px;width:119px;height:31px;background:#fff;border:1.5px solid #444"></div>
<div style="position:absolute;left:22px;top:1049px;width:388px;height:43px;background:#c9dcf8"></div>
<div style="left:476px;top:13px;font-family:'Liberation Sans',sans-serif;font-size:21.3px;line-height:28px;color:#262626;white-space:pre">delay_elm - [/media/psf/Dropbox/home/work/async_blog/ex_async/delay_test/delay_elm/delay_elm.xpr] - Vivado 2019.1</div>
<div class="t" style="left:48.5px;top:60.5px;color:#1c1c24;">File</div>
<div class="t" style="left:123.0px;top:60.5px;color:#1c1c24;">Edit</div>
<div class="t" style="left:198.7px;top:60.5px;color:#1c1c24;">Flow</div>
<div class="t" style="left:272.0px;top:60.5px;color:#1c1c24;">Tools</div>
<div class="t" style="left:356.0px;top:60.5px;color:#1c1c24;">Reports</div>
<div class="t" style="left:458.7px;top:60.5px;color:#1c1c24;">Window</div>
<div class="t" style="left:552.8px;top:60.5px;color:#1c1c24;">Layout</div>
<div class="t" style="left:646.8px;top:60.5px;color:#1c1c24;">View</div>
<div class="t" style="left:720.0px;top:60.5px;color:#1c1c24;">Help</div>
<div class="t" style="left:833.0px;top:58.0px;color:#8c8c8c;">Quick Access</div>
<div class="t" style="left:1749.8px;top:60.6px;color:#1c1c24;">Implementation Complete</div>
<div class="t" style="left:1752.2px;top:108.2px;color:#1c1c24;">Default Layout</div>
<div class="t b" style="left:36.3px;top:154.0px;color:#f4f4f4;">Flow Navigator</div>
<div class="t b" style="left:63.0px;top:199.9px;color:#1c1c24;">PROJECT MANAGER</div>
<div class="t" style="left:96.5px;top:241.5px;color:#1c1c24;">Settings</div>
<div class="t" style="left:96.5px;top:287.2px;color:#1c1c24;">Add Sources</div>
<div class="t" style="left:96.5px;top:333.0px;color:#1c1c24;">Language Templates</div>
<div class="t" style="left:96.5px;top:379.4px;color:#1c1c24;">IP Catalog</div>
<div class="t" style="left:63.9px;top:455.1px;color:#1c1c24;">IP INTEGRATOR</div>
<div class="t" style="left:96.5px;top:496.3px;color:#1c1c24;">Create Block Design</div>
<div class="t" style="left:96.5px;top:543.1px;color:#9a9a9a;">Open Block Design</div>
<div class="t" style="left:96.5px;top:588.9px;color:#9a9a9a;">Generate Block Design</div>
<div class="t" style="left:63.9px;top:664.7px;color:#1c1c24;">SIMULATION</div>
<div class="t" style="left:96.5px;top:706.3px;color:#1c1c24;">Run Simulation</div>
<div class="t" style="left:63.9px;top:782.0px;color:#1c1c24;">RTL ANALYSIS</div>
<div class="t" style="left:96.5px;top:823.8px;color:#1c1c24;">Open Elaborated Design</div>
<div class="t" style="left:63.9px;top:899.5px;color:#1c1c24;">SYNTHESIS</div>
<div class="t" style="left:96.5px;top:941.0px;color:#1c1c24;">Run Synthesis</div>
<div class="t" style="left:96.5px;top:986.8px;color:#1c1c24;">Open Synthesized Design</div>
<div class="t b" style="left:63.0px;top:1062.5px;color:#1c1c24;">IMPLEMENTATION</div>
<div class="t" style="left:96.5px;top:1104.3px;color:#1c1c24;">Run Implementation</div>
<div class="t b" style="left:96.0px;top:1150.2px;color:#1c1c24;">Open Implemented Design</div>
<div class="t" style="left:129.7px;top:1196.5px;color:#1c1c24;">Constraints Wizard</div>
<div class="t" style="left:129.7px;top:1241.5px;color:#1c1c24;">Edit Timing Constraints</div>
<div class="t" style="left:129.7px;top:1287.8px;color:#1c1c24;">Report Timing Summary</div>
<div class="t" style="left:129.7px;top:1334.0px;color:#1c1c24;">Report Clock Networks</div>
<div class="t b" style="left:453.7px;top:153.5px;color:#111;">IMPLEMENTED DESIGN</div>
<div class="t" style="left:653.5px;top:153.5px;color:#1c1c24;letter-spacing:-0.15px"> - xc7z020clg400-1</div>
<div class="t b" style="left:463.3px;top:217.6px;color:#8e8e8e;">Sources</div>
<div class="t b" style="left:575.4px;top:217.3px;color:#111;">Netlist</div>
<div class="t" style="left:520.3px;top:316.5px;color:#1c1c24;">U_delay <span style="color:#9a9a9a">(delay)</span></div>
<div class="t" style="left:555.0px;top:351.4px;color:#1c1c24;">Nets <span style="color:#9a9a9a">(6)</span></div>
<div class="t" style="left:555.0px;top:385.8px;color:#1c1c24;">Leaf Cells <span style="color:#9a9a9a">(5)</span></div>
<div class="t" style="left:589.0px;top:421.0px;color:#1c1c24;">buf_inst1 (LUT1)</div>
<div class="t" style="left:589.0px;top:456.0px;color:#1c1c24;">buf_inst2 (LUT1)</div>
<div class="t" style="left:589.0px;top:491.0px;color:#1c1c24;">buf_inst3 (LUT1)</div>
<div class="t" style="left:589.0px;top:526.0px;color:#1c1c24;">buf_inst4 (LUT1)</div>
<div class="t" style="left:589.0px;top:561.0px;color:#1c1c24;">buf_inst5 (LUT1)</div>
<div class="t" style="left:520.3px;top:595.3px;color:#1c1c24;">U_multi <span style="color:#9a9a9a">(multi)</span></div>
<div class="t b" style="left:462.4px;top:660.5px;color:#111;">Cell Properties</div>
<div class="t" style="left:490.0px;top:708.8px;color:#1c1c24;">buf_inst1</div>
<div class="t" style="left:475.2px;top:772.8px;color:#1c1c24;">Name:</div>
<div class="t" style="left:691.0px;top:772.8px;color:#2a4170;">U_delay/buf_inst1</div>
<div class="t" style="left:475.2px;top:816.0px;color:#1c1c24;">Parent:</div>
<div class="t" style="left:724.0px;top:816.0px;color:#1c1c24;">U_delay</div>
<div class="t b" style="left:470.7px;top:878.6px;color:#111;">General</div>
<div class="t" style="left:579.4px;top:878.6px;color:#8a8a8a;">Properties</div>
<div class="t" style="left:725.4px;top:878.6px;color:#8a8a8a;">Power</div>
<div class="t" style="left:813.3px;top:878.6px;color:#8a8a8a;">Nets</div>
<div class="t" style="left:892.2px;top:878.6px;color:#8a8a8a;">Cell</div>
<div class="t b" style="left:1056.2px;top:217.5px;color:#8e8e8e;">Project Summary</div>
<div class="t b" style="left:1288.7px;top:217.5px;color:#111;">Device</div>
<div class="t b" style="left:463.0px;top:951.4px;color:#8e8e8e;">Tcl Console</div>
<div class="t b" style="left:619.5px;top:951.4px;color:#8e8e8e;">Messages</div>
<div class="t b" style="left:743.2px;top:951.4px;color:#8e8e8e;">Log</div>
<div class="t b" style="left:811.9px;top:951.4px;color:#8e8e8e;">Reports</div>
<div class="t b" style="left:924.6px;top:951.4px;color:#8e8e8e;">Design Runs</div>
<div class="t b" style="left:1081.5px;top:951.4px;color:#8e8e8e;">Power</div>
<div class="t b" style="left:1171.6px;top:951.4px;color:#8e8e8e;">DRC</div>
<div class="t b" style="left:1239.6px;top:951.4px;color:#8e8e8e;">Methodology</div>
<div class="t b" style="left:1397.8px;top:951.4px;color:#111;">Timing</div>
<div class="t" style="left:511.6px;top:1046.0px;color:#1c1c24;">General Information</div>
<div class="t" style="left:511.6px;top:1081.0px;color:#1c1c24;">Timer Settings</div>
<div class="t" style="left:511.6px;top:1116.0px;color:#1c1c24;">Design Timing Summary</div>
<div class="t" style="left:511.6px;top:1150.6px;color:#1c1c24;">Check Timing <span style="color:#9a9a9a">(53)</span></div>
<div class="t" style="left:511.6px;top:1185.2px;color:#1c1c24;">User Ignored Paths</div>
<div class="t" style="left:511.6px;top:1220.2px;color:#1c1c24;">Unconstrained Paths</div>
<div class="t b" style="left:783.5px;top:999.8px;color:#111;">Design Timing Summary</div>
<div class="t b" style="left:799.6px;top:1072.5px;color:#111;">Setup</div>
<div class="t b" style="left:1179.7px;top:1072.5px;color:#111;">Hold</div>
<div class="t b" style="left:1560.0px;top:1072.5px;color:#111;">Pulse Width</div>
<div class="t" style="left:832.0px;top:1116.5px;color:#1c1c24;">Worst Negative Slack (WNS):</div>
<div class="t" style="left:1121.4px;top:1116.5px;color:#1c1c24;">NA</div>
<div class="t" style="left:1213.0px;top:1116.5px;color:#1c1c24;">Worst Hold Slack (WHS):</div>
<div class="t" style="left:1502.1px;top:1116.5px;color:#1c1c24;">NA</div>
<div class="t" style="left:1594.0px;top:1116.5px;color:#1c1c24;">Worst Pulse Width Slack (WPWS):</div>
<div class="t" style="left:832.0px;top:1154.5px;color:#1c1c24;">Total Negative Slack (TNS):</div>
<div class="t" style="left:1121.4px;top:1154.5px;color:#1c1c24;">NA</div>
<div class="t" style="left:1213.0px;top:1154.5px;color:#1c1c24;">Total Hold Slack (THS):</div>
<div class="t" style="left:1502.1px;top:1154.5px;color:#1c1c24;">NA</div>
<div class="t" style="left:1594.0px;top:1154.5px;color:#1c1c24;">Total Pulse Width Negative Slack (TPWS):</div>
<div class="t" style="left:832.0px;top:1192.5px;color:#1c1c24;">Number of Failing Endpoints:</div>
<div class="t" style="left:1121.4px;top:1192.5px;color:#1c1c24;">NA</div>
<div class="t" style="left:1213.0px;top:1192.5px;color:#1c1c24;">Number of Failing Endpoints:</div>
<div class="t" style="left:1502.1px;top:1192.5px;color:#1c1c24;">NA</div>
<div class="t" style="left:1594.0px;top:1192.5px;color:#1c1c24;">Number of Failing Endpoints:</div>
<div class="t" style="left:832.0px;top:1230.5px;color:#1c1c24;">Total Number of Endpoints:</div>
<div class="t" style="left:1121.4px;top:1230.5px;color:#1c1c24;">NA</div>
<div class="t" style="left:1213.0px;top:1230.5px;color:#1c1c24;">Total Number of Endpoints:</div>
<div class="t" style="left:1502.1px;top:1230.5px;color:#1c1c24;">NA</div>
<div class="t" style="left:1594.0px;top:1230.5px;color:#1c1c24;">Total Number of Endpoints:</div>
<div class="t b" style="left:471.0px;top:1315.8px;color:#111;">Timing Summary - impl_1 (saved)</div>
<div style="left:34.5px;top:17px;width:19.5px;height:19.5px;border-radius:50%;background:#ee6a5f;border:1px solid #d9574c"></div>
<div style="left:66.5px;top:17px;width:19.5px;height:19.5px;border-radius:50%;background:#f5be4f;border:1px solid #dea236"></div>
<div style="left:98px;top:17px;width:19.5px;height:19.5px;border-radius:50%;background:#62c655;border:1px solid #4aab3e"></div>
<svg style="left:443.0px;top:16.5px" width="22" height="23" viewBox="0 0 22 23"><path d="M0.5 0.5h21v22h-21z" fill="#fbfbfb" stroke="#b5b5b5"/><text x="11" y="19.5" text-anchor="middle" font-family="Liberation Serif" font-size="22" fill="#555">X</text></svg>
<div style="position:absolute;left:49.0px;top:77px;width:10px;height:2px;background:#222"></div>
<div style="position:absolute;left:123.5px;top:77px;width:10px;height:2px;background:#222"></div>
<div style="position:absolute;left:208.8px;top:77px;width:10px;height:2px;background:#222"></div>
<div style="position:absolute;left:272.5px;top:77px;width:10px;height:2px;background:#222"></div>
<div style="position:absolute;left:385.3px;top:77px;width:10px;height:2px;background:#222"></div>
<div style="position:absolute;left:459.2px;top:77px;width:10px;height:2px;background:#222"></div>
<div style="position:absolute;left:572.5px;top:77px;width:10px;height:2px;background:#222"></div>
<div style="position:absolute;left:647.3px;top:77px;width:10px;height:2px;background:#222"></div>
<div style="position:absolute;left:720.5px;top:77px;width:10px;height:2px;background:#222"></div>
<div style="left:786px;top:50px;width:1px;height:37px;background:#c8c8c8"></div>
<svg style="left:805.0px;top:56.0px" width="24" height="18" viewBox="0 0 24 18"><circle cx="7" cy="7" r="5.5" fill="none" stroke="#888" stroke-width="2"/><path d="M11 11l4.5 4.5" stroke="#888" stroke-width="2.4"/><path d="M18 6h5l-2.5 3z" fill="#888"/></svg>
<div style="position:absolute;left:804px;top:84px;width:225px;height:1.6px;background:#ababab"></div>
<svg style="left:53.0px;top:105.5px" width="24" height="21" viewBox="0 0 24 21"><path d="M1 1h7l2 2.5h7v4H5.5L2 19H1z" fill="#2f5396"/><path d="M5.2 8.2h18.3l-4.3 12.3H1z" fill="#2f5396" stroke="#e2e2e2" stroke-width="1.4"/></svg>
<svg style="left:73.0px;top:125.5px" width="8" height="8" viewBox="0 0 8 8"><path d="M8 0V8H0z" fill="#444"/></svg>
<svg style="left:108.0px;top:105.0px" width="22" height="22" viewBox="0 0 22 22"><path d="M0 0h22v22H0z" fill="#bcbcbc"/><path d="M12 0h4v5h-4z" fill="#e4e4e4"/><path d="M4 0h13v7H4z" fill="none"/></svg>
<svg style="left:164.0px;top:109.0px" width="22" height="14" viewBox="0 0 22 14"><path d="M0 6L8 0v4c7 0 12 3 14 10c-3-4-7-5-14-5v4z" fill="#bcbcbc"/></svg>
<svg style="left:219.0px;top:109.0px" width="22" height="14" viewBox="0 0 22 14"><path d="M22 6L14 0v4C7 4 2 7 0 14c3-4 7-5 14-5v4z" fill="#bcbcbc"/></svg>
<svg style="left:275.5px;top:104.5px" width="20" height="23" viewBox="0 0 20 23"><path d="M0 0h17v18H0z" fill="#2f5396"/><path d="M4 3.5h15v19H4z" fill="#fff" stroke="#2f5396" stroke-width="2"/><path d="M7 9h9M7 12.5h9M7 16h9" stroke="#2f5396" stroke-width="2"/></svg>
<svg style="left:330.0px;top:104.5px" width="22" height="23" viewBox="0 0 22 23"><path d="M0 0h15v20H0z" fill="#bcbcbc"/><path d="M4 2h7" stroke="#e8e8e8" stroke-width="1.5"/><path d="M11 9h11v14H11z" fill="#bcbcbc" stroke="#e2e2e2" stroke-width="1.5"/></svg>
<svg style="left:385.0px;top:105.0px" width="22" height="22" viewBox="0 0 22 22"><path d="M1 1L21 21M21 1L1 21" stroke="#bcbcbc" stroke-width="3"/></svg>
<svg style="left:440.0px;top:107.5px" width="24" height="17" viewBox="0 0 24 17"><path d="M1.5 10L5 1.5h5v5h4v-5h5l3.5 8.5z" fill="#2f5396"/><circle cx="6" cy="11.5" r="4.3" fill="#e3e3e3" stroke="#2f5396" stroke-width="2.6"/><circle cx="18" cy="11.5" r="4.3" fill="#e3e3e3" stroke="#2f5396" stroke-width="2.6"/></svg>
<svg style="left:496.0px;top:105.5px" width="19" height="21" viewBox="0 0 19 21"><path d="M0 0L19 10.5L0 21z" fill="#3db233"/></svg>
<svg style="left:514.0px;top:125.0px" width="8" height="8" viewBox="0 0 8 8"><path d="M8 0V8H0z" fill="#444"/></svg>
<svg style="left:548.0px;top:105.0px" width="24" height="22" viewBox="0 0 24 22"><path d="M3 0h6v13h3l-6 9l-6-9h3z" fill="#3db233"/><text x="13" y="8" font-family="Liberation Mono" font-size="9" font-weight="bold" fill="#555">01</text><text x="13" y="18" font-family="Liberation Mono" font-size="9" font-weight="bold" fill="#555">10</text></svg>
<svg style="left:604.0px;top:105.5px" width="23" height="21" viewBox="0 0 23 21"><path d="M0 0L10 7L0 13z" fill="#2f5396"/><path d="M2 6h12v7H8v7H0" fill="none" stroke="#2f5396" stroke-width="2.6"/><path d="M16 1h5v20h-5z" fill="#2f5396"/></svg>
<svg style="left:660.0px;top:105.0px" width="22" height="22" viewBox="0 0 22 22"><circle cx="11" cy="13" r="8" fill="none" stroke="#2f5396" stroke-width="2.8"/><path d="M8 1h6" stroke="#2f5396" stroke-width="2.5"/><path d="M11 2v3M2 5l3 2M20 5l-3 2" stroke="#2f5396" stroke-width="2.5"/><path d="M11 9v4.5" stroke="#2f5396" stroke-width="2"/><circle cx="11" cy="14" r="1.5" fill="#2f5396"/></svg>
<svg style="left:717.5px;top:105.0px" width="17" height="22" viewBox="0 0 17 22"><path d="M1 4h15v17H1z" fill="none" stroke="#2f5396" stroke-width="1.8"/><path d="M5 1h7v5H5z" fill="none" stroke="#2f5396" stroke-width="1.6"/><path d="M4.5 13l3 3l5-6" fill="none" stroke="#2f5396" stroke-width="1.7"/></svg>
<svg style="left:771.0px;top:105.0px" width="22" height="22" viewBox="0 0 22 22"><path d="M21.83 9.07L21.83 12.93L18.47 13.64L18.15 14.41L20.02 17.29L17.29 20.02L14.41 18.15L13.64 18.47L12.93 21.83L9.07 21.83L8.36 18.47L7.59 18.15L4.71 20.02L1.98 17.29L3.85 14.41L3.53 13.64L0.17 12.93L0.17 9.07L3.53 8.36L3.85 7.59L1.98 4.71L4.71 1.98L7.59 3.85L8.36 3.53L9.07 0.17L12.93 0.17L13.64 3.53L14.41 3.85L17.29 1.98L20.02 4.71L18.15 7.59L18.47 8.36z" fill="#2f5396"/><circle cx="11.0" cy="11.0" r="6.16" fill="#2f5396"/><circle cx="11.0" cy="11.0" r="3.08" fill="#fff"/></svg>
<svg style="left:827.0px;top:105.0px" width="22" height="22" viewBox="0 0 22 22"><path d="M21 6V2H1.5l9 9.5l-9 9.5H21v-4" fill="none" stroke="#2f5396" stroke-width="3"/></svg>
<svg style="left:882.0px;top:105.0px" width="22" height="22" viewBox="0 0 22 22"><path d="M1 21h20l-4-9l-4 5l-5-8l3-7H5l-4 9z" fill="#c6c6c6"/><path d="M3 21L20 2" stroke="#c6c6c6" stroke-width="2.5"/></svg>
<svg style="left:937.0px;top:105.0px" width="22" height="22" viewBox="0 0 22 22"><path d="M1 14L12 3l9 9L10 21z" fill="none" stroke="#cdcdcd" stroke-width="1.5"/><path d="M2 20L20 2" stroke="#c6c6c6" stroke-width="3.5"/></svg>
<svg style="left:993.0px;top:105.0px" width="22" height="22" viewBox="0 0 22 22"><path d="M3 1l4 18l3-6l6 7l2-2l-6-7l6-2z" fill="#fff" stroke="#2f5396" stroke-width="1.5"/><path d="M1 21L21 1" stroke="#555" stroke-width="3"/></svg>
<div style="left:91px;top:100px;width:1px;height:32px;background:#d4d4d4"></div>
<div style="left:146.7px;top:100px;width:1px;height:32px;background:#d4d4d4"></div>
<div style="left:202.3px;top:100px;width:1px;height:32px;background:#d4d4d4"></div>
<div style="left:257px;top:100px;width:1px;height:32px;background:#d4d4d4"></div>
<div style="left:312.7px;top:100px;width:1px;height:32px;background:#d4d4d4"></div>
<div style="left:368.4px;top:100px;width:1px;height:32px;background:#d4d4d4"></div>
<div style="left:424px;top:100px;width:1px;height:32px;background:#d4d4d4"></div>
<div style="left:479.4px;top:100px;width:1px;height:32px;background:#d4d4d4"></div>
<div style="left:532.2px;top:100px;width:1px;height:32px;background:#d4d4d4"></div>
<div style="left:588px;top:100px;width:1px;height:32px;background:#d4d4d4"></div>
<div style="left:643.6px;top:100px;width:1px;height:32px;background:#d4d4d4"></div>
<div style="left:698.3px;top:100px;width:1px;height:32px;background:#d4d4d4"></div>
<div style="left:754.9px;top:100px;width:1px;height:32px;background:#d4d4d4"></div>
<div style="left:809.7px;top:100px;width:1px;height:32px;background:#d4d4d4"></div>
<div style="left:865.5px;top:100px;width:1px;height:32px;background:#d4d4d4"></div>
<div style="left:920.8px;top:100px;width:1px;height:32px;background:#d4d4d4"></div>
<div style="left:976px;top:100px;width:1px;height:32px;background:#d4d4d4"></div>
<div style="left:1031.2px;top:100px;width:1px;height:32px;background:#d4d4d4"></div>
<svg style="left:1990.5px;top:58.0px" width="22" height="20" viewBox="0 0 22 20"><path d="M1.5 11l6 6.5L20.5 2" fill="none" stroke="#3db233" stroke-width="4.2"/></svg>
<svg style="left:1724.2px;top:107.8px" width="19" height="16" viewBox="0 0 19 16"><path d="M0 0h5v6H0zM7 0h12v6H7zM0 9h19v7H0z" fill="#a8a8a8"/></svg>
<svg style="left:1981.0px;top:111.0px" width="16" height="10" viewBox="0 0 16 10"><path d="M1 1L8.0 9L15 1" fill="none" stroke="#666" stroke-width="2.7"/></svg>
<svg style="left:312.2px;top:154.0px" width="13" height="16" viewBox="0 0 13 16"><path d="M1 0h11L6.5 5z" fill="#d9d9d9"/><path d="M0 7h13v3H0z" fill="#d9d9d9"/><path d="M1 16h11L6.5 11z" fill="#d9d9d9"/></svg>
<svg style="left:343.8px;top:154.0px" width="13" height="16" viewBox="0 0 13 16"><path d="M1 5.5h11L6.5 0z" fill="#d9d9d9"/><path d="M0 7h13v3H0z" fill="#d9d9d9"/><path d="M1 10.5h11L6.5 16z" fill="#d9d9d9"/></svg>
<svg style="left:375.2px;top:154.2px" width="14" height="16.5" viewBox="0 0 14 16.5"><path d="M1.8 5.2C1.8 2.6 4 1.2 7 1.2s5.2 1.5 5.2 4c0 2.8-3.6 3.2-3.6 6v0.6" fill="none" stroke="#d9d9d9" stroke-width="2.8"/><path d="M6.4 13.3h3.3v3.2H6.4z" fill="#d9d9d9"/></svg>
<svg style="left:406.0px;top:166.7px" width="16" height="3" viewBox="0 0 16 3"><path d="M0 0h16v3H0z" fill="#d9d9d9"/></svg>
<svg style="left:33.1px;top:204.0px" width="15" height="9" viewBox="0 0 15 9"><path d="M1 1L7.5 8L14 1" fill="none" stroke="#222" stroke-width="2.2"/></svg>
<svg style="left:33.1px;top:458.0px" width="15" height="9" viewBox="0 0 15 9"><path d="M1 1L7.5 8L14 1" fill="none" stroke="#222" stroke-width="2.2"/></svg>
<svg style="left:33.1px;top:667.8px" width="15" height="9" viewBox="0 0 15 9"><path d="M1 1L7.5 8L14 1" fill="none" stroke="#222" stroke-width="2.2"/></svg>
<svg style="left:33.1px;top:785.2px" width="15" height="9" viewBox="0 0 15 9"><path d="M1 1L7.5 8L14 1" fill="none" stroke="#222" stroke-width="2.2"/></svg>
<svg style="left:33.1px;top:902.5px" width="15" height="9" viewBox="0 0 15 9"><path d="M1 1L7.5 8L14 1" fill="none" stroke="#222" stroke-width="2.2"/></svg>
<svg style="left:33.1px;top:1065.8px" width="15" height="9" viewBox="0 0 15 9"><path d="M1 1L7.5 8L14 1" fill="none" stroke="#222" stroke-width="2.2"/></svg>
<svg style="left:63.5px;top:238.0px" width="22" height="22" viewBox="0 0 22 22"><path d="M21.83 9.07L21.83 12.93L18.47 13.64L18.15 14.41L20.02 17.29L17.29 20.02L14.41 18.15L13.64 18.47L12.93 21.83L9.07 21.83L8.36 18.47L7.59 18.15L4.71 20.02L1.98 17.29L3.85 14.41L3.53 13.64L0.17 12.93L0.17 9.07L3.53 8.36L3.85 7.59L1.98 4.71L4.71 1.98L7.59 3.85L8.36 3.53L9.07 0.17L12.93 0.17L13.64 3.53L14.41 3.85L17.29 1.98L20.02 4.71L18.15 7.59L18.47 8.36z" fill="#2f5396"/><circle cx="11.0" cy="11.0" r="6.16" fill="#2f5396"/><circle cx="11.0" cy="11.0" r="3.08" fill="#fff"/></svg>
<svg style="left:63.5px;top:376.0px" width="22" height="22" viewBox="0 0 22 22"><path d="M6 2h10v11H6z" fill="none" stroke="#2f5396" stroke-width="2.2"/><path d="M0 5h6M0 10h6M16 5h6M16 10h6M11 13v9" stroke="#2f5396" stroke-width="2"/></svg>
<svg style="left:69.4px;top:824.3px" width="9" height="15" viewBox="0 0 9 15"><path d="M1 1L8 7.5L1 14" fill="none" stroke="#333" stroke-width="1.8"/></svg>
<svg style="left:69.4px;top:987.0px" width="9" height="15" viewBox="0 0 9 15"><path d="M1 1L8 7.5L1 14" fill="none" stroke="#333" stroke-width="1.8"/></svg>
<svg style="left:65.2px;top:938.7px" width="17.5" height="20" viewBox="0 0 17.5 20"><path d="M0 0L17.5 10.0L0 20z" fill="#3db233"/></svg>
<svg style="left:65.4px;top:1102.0px" width="18" height="20.5" viewBox="0 0 18 20.5"><path d="M0 0L18 10.25L0 20.5z" fill="#3db233"/></svg>
<svg style="left:65.3px;top:1155.0px" width="16" height="9" viewBox="0 0 16 9"><path d="M1 1L8.0 8L15 1" fill="none" stroke="#444" stroke-width="1.6"/></svg>
<svg style="left:97.2px;top:1284.6px" width="22" height="22" viewBox="0 0 22 22"><circle cx="11" cy="13" r="8" fill="none" stroke="#2f5396" stroke-width="2.8"/><path d="M8 1h6" stroke="#2f5396" stroke-width="2.5"/><path d="M11 2v3M2 5l3 2M20 5l-3 2" stroke="#2f5396" stroke-width="2.5"/><path d="M11 9v4.5" stroke="#2f5396" stroke-width="2"/><circle cx="11" cy="14" r="1.5" fill="#2f5396"/></svg>
<svg style="left:413.5px;top:192.3px" width="16" height="9" viewBox="0 0 16 9"><path d="M1 8L8.0 1L15 8" fill="none" stroke="#666" stroke-width="2.7"/></svg>
<div style="left:414.5px;top:211px;width:12px;height:776px;background:#bdbdbd;border-radius:6.0px"></div>
<svg style="left:413.5px;top:1339.3px" width="16" height="9" viewBox="0 0 16 9"><path d="M1 1L8.0 8L15 1" fill="none" stroke="#666" stroke-width="2.7"/></svg>
<svg style="left:1964.8px;top:154.8px" width="14" height="16.5" viewBox="0 0 14 16.5"><path d="M1.8 5.2C1.8 2.6 4 1.2 7 1.2s5.2 1.5 5.2 4c0 2.8-3.6 3.2-3.6 6v0.6" fill="none" stroke="#8c8c8c" stroke-width="2.8"/><path d="M6.4 13.3h3.3v3.2H6.4z" fill="#8c8c8c"/></svg>
<svg style="left:1995.7px;top:154.0px" width="16" height="16" viewBox="0 0 16 16"><path d="M1 1L15 15M15 1L1 15" stroke="#8c8c8c" stroke-width="2.6"/></svg>
<svg style="left:688.6px;top:222.5px" width="12" height="12" viewBox="0 0 12 12"><path d="M0.5 0.5L11.5 11.5M11.5 0.5L0.5 11.5" stroke="#8c8c8c" stroke-width="2"/></svg>
<svg style="left:892.0px;top:219.2px" width="14" height="16.5" viewBox="0 0 14 16.5"><path d="M1.8 5.2C1.8 2.6 4 1.2 7 1.2s5.2 1.5 5.2 4c0 2.8-3.6 3.2-3.6 6v0.6" fill="none" stroke="#8c8c8c" stroke-width="2.8"/><path d="M6.4 13.3h3.3v3.2H6.4z" fill="#8c8c8c"/></svg>
<svg style="left:922.5px;top:231.5px" width="16" height="3" viewBox="0 0 16 3"><path d="M0 0h16v3H0z" fill="#8c8c8c"/></svg>
<svg style="left:954.3px;top:219.0px" width="16" height="16" viewBox="0 0 16 16"><path d="M1.2 1.2h13.6v13.6h-13.6z" fill="none" stroke="#8c8c8c" stroke-width="2.4"/></svg>
<svg style="left:987.0px;top:219.0px" width="16" height="16" viewBox="0 0 16 16"><path d="M7 1.2H1.2v13.6h13.6V9" fill="none" stroke="#8c8c8c" stroke-width="2.4"/><path d="M8 8L15 1M10 1h5v5" fill="none" stroke="#8c8c8c" stroke-width="2"/></svg>
<svg style="left:472.2px;top:264.3px" width="17" height="20" viewBox="0 0 17 20"><path d="M1 0h15L8.5 5z" fill="#2f5396"/><path d="M0 7h17v3H0z" fill="#2f5396"/><path d="M1 20h15L8.5 15z" fill="#2f5396"/></svg>
<svg style="left:524.6px;top:263.8px" width="23" height="21" viewBox="0 0 23 21"><path d="M0 0L10 7L0 13z" fill="#2f5396"/><path d="M2 6h12v7H8v7H0" fill="none" stroke="#2f5396" stroke-width="2.6"/><path d="M16 1h5v20h-5z" fill="#2f5396"/></svg>
<div style="left:507.6px;top:259px;width:1px;height:30px;background:#d4d4d4"></div>
<div style="left:563.7px;top:259px;width:1px;height:30px;background:#d4d4d4"></div>
<svg style="left:978.2px;top:263.3px" width="22" height="22" viewBox="0 0 22 22"><path d="M21.83 9.07L21.83 12.93L18.47 13.64L18.15 14.41L20.02 17.29L17.29 20.02L14.41 18.15L13.64 18.47L12.93 21.83L9.07 21.83L8.36 18.47L7.59 18.15L4.71 20.02L1.98 17.29L3.85 14.41L3.53 13.64L0.17 12.93L0.17 9.07L3.53 8.36L3.85 7.59L1.98 4.71L4.71 1.98L7.59 3.85L8.36 3.53L9.07 0.17L12.93 0.17L13.64 3.53L14.41 3.85L17.29 1.98L20.02 4.71L18.15 7.59L18.47 8.36z" fill="#2f5396"/><circle cx="11.0" cy="11.0" r="6.16" fill="#2f5396"/><circle cx="11.0" cy="11.0" r="3.08" fill="#fff"/></svg>
<svg style="left:467.9px;top:320.2px" width="13" height="8" viewBox="0 0 13 8"><path d="M1 1L6.5 7L12 1" fill="none" stroke="#555" stroke-width="1.6"/></svg>
<svg style="left:488.5px;top:314.0px" width="19" height="19" viewBox="0 0 19 19"><path d="M0.8 0.8h17.4v17.4H0.8z" fill="#fff" stroke="#8e8e8e" stroke-width="1.6"/><path d="M5 4h9l-1.8 3.2v4.6l1.8 3.2H5l1.8-3.2V7.2z" fill="#f99d32"/></svg>
<svg style="left:505.3px;top:352.9px" width="8" height="14" viewBox="0 0 8 14"><path d="M1 1L7 7.0L1 13" fill="none" stroke="#555" stroke-width="1.6"/></svg>
<svg style="left:523.5px;top:351.0px" width="19" height="16" viewBox="0 0 19 16"><path d="M0.5 0.5h6l1.5 2h8.5v4H4L1.5 15H0.5z" fill="#e2e2e2"/><path d="M4 6.5h15l-3 9H1z" fill="#c9c9c9"/></svg>
<svg style="left:502.8px;top:389.8px" width="13" height="8" viewBox="0 0 13 8"><path d="M1 1L6.5 7L12 1" fill="none" stroke="#555" stroke-width="1.6"/></svg>
<svg style="left:523.5px;top:385.5px" width="19" height="16" viewBox="0 0 19 16"><path d="M0.5 0.5h6l1.5 2h8.5v4H4L1.5 15H0.5z" fill="#e2e2e2"/><path d="M4 6.5h15l-3 9H1z" fill="#c9c9c9"/></svg>
<svg style="left:558.3px;top:419.2px" width="19" height="19" viewBox="0 0 19 19"><path d="M0 0h19v19H0z" fill="#f2ac2f"/><path d="M0 7h19v5H0z" fill="#a9bfcf"/></svg>
<svg style="left:558.3px;top:454.2px" width="19" height="19" viewBox="0 0 19 19"><path d="M0 0h19v19H0z" fill="#f2ac2f"/><path d="M0 7h19v5H0z" fill="#a9bfcf"/></svg>
<svg style="left:558.3px;top:489.2px" width="19" height="19" viewBox="0 0 19 19"><path d="M0 0h19v19H0z" fill="#f2ac2f"/><path d="M0 7h19v5H0z" fill="#a9bfcf"/></svg>
<svg style="left:558.3px;top:524.2px" width="19" height="19" viewBox="0 0 19 19"><path d="M0 0h19v19H0z" fill="#f2ac2f"/><path d="M0 7h19v5H0z" fill="#a9bfcf"/></svg>
<svg style="left:558.3px;top:559.2px" width="19" height="19" viewBox="0 0 19 19"><path d="M0 0h19v19H0z" fill="#f2ac2f"/><path d="M0 7h19v5H0z" fill="#a9bfcf"/></svg>
<svg style="left:470.4px;top:596.8px" width="8" height="14" viewBox="0 0 8 14"><path d="M1 1L7 7.0L1 13" fill="none" stroke="#555" stroke-width="1.6"/></svg>
<svg style="left:488.5px;top:593.0px" width="19" height="19" viewBox="0 0 19 19"><path d="M0.8 0.8h17.4v17.4H0.8z" fill="#fff" stroke="#8e8e8e" stroke-width="1.6"/><path d="M5 4h9l-1.8 3.2v4.6l1.8 3.2H5l1.8-3.2V7.2z" fill="#f99d32"/></svg>
<svg style="left:999.0px;top:311.5px" width="15" height="9" viewBox="0 0 15 9"><path d="M1 8L7.5 1L14 8" fill="none" stroke="#666" stroke-width="2.7"/></svg>
<div style="left:1000px;top:397px;width:12px;height:190px;background:#bdbdbd;border-radius:6.0px"></div>
<svg style="left:999.0px;top:603.3px" width="15" height="9" viewBox="0 0 15 9"><path d="M1 1L7.5 8L14 1" fill="none" stroke="#666" stroke-width="2.7"/></svg>
<svg style="left:860.8px;top:661.2px" width="14" height="16.5" viewBox="0 0 14 16.5"><path d="M1.8 5.2C1.8 2.6 4 1.2 7 1.2s5.2 1.5 5.2 4c0 2.8-3.6 3.2-3.6 6v0.6" fill="none" stroke="#8c8c8c" stroke-width="2.8"/><path d="M6.4 13.3h3.3v3.2H6.4z" fill="#8c8c8c"/></svg>
<svg style="left:891.2px;top:674.5px" width="16" height="3" viewBox="0 0 16 3"><path d="M0 0h16v3H0z" fill="#8c8c8c"/></svg>
<svg style="left:923.2px;top:661.8px" width="16" height="16" viewBox="0 0 16 16"><path d="M1.2 1.2h13.6v13.6h-13.6z" fill="none" stroke="#8c8c8c" stroke-width="2.4"/></svg>
<svg style="left:954.5px;top:661.8px" width="16" height="16" viewBox="0 0 16 16"><path d="M7 1.2H1.2v13.6h13.6V9" fill="none" stroke="#8c8c8c" stroke-width="2.4"/><path d="M8 8L15 1M10 1h5v5" fill="none" stroke="#8c8c8c" stroke-width="2"/></svg>
<svg style="left:987.0px;top:661.7px" width="15" height="15" viewBox="0 0 15 15"><path d="M0.5 0.5L14.5 14.5M14.5 0.5L0.5 14.5" stroke="#8c8c8c" stroke-width="2.4"/></svg>
<svg style="left:461.5px;top:707.3px" width="19" height="19" viewBox="0 0 19 19"><path d="M0 0h19v19H0z" fill="#f2ac2f"/><path d="M0 7h19v5H0z" fill="#a9bfcf"/></svg>
<svg style="left:868.0px;top:709.1px" width="22" height="17" viewBox="0 0 22 17"><path d="M0 8.5L9 0v5h13v7H9v5z" fill="#bdbdbd"/></svg>
<div style="left:906.6px;top:700.4px;width:1px;height:32.80000000000007px;background:#d4d4d4"></div>
<svg style="left:923.2px;top:709.1px" width="22" height="17" viewBox="0 0 22 17"><path d="M22 8.5L13 0v5H0v7h13v5z" fill="#bdbdbd"/></svg>
<div style="left:961.7px;top:700.4px;width:1px;height:32.80000000000007px;background:#d4d4d4"></div>
<svg style="left:978.3px;top:706.5px" width="22" height="22" viewBox="0 0 22 22"><path d="M21.83 9.07L21.83 12.93L18.47 13.64L18.15 14.41L20.02 17.29L17.29 20.02L14.41 18.15L13.64 18.47L12.93 21.83L9.07 21.83L8.36 18.47L7.59 18.15L4.71 20.02L1.98 17.29L3.85 14.41L3.53 13.64L0.17 12.93L0.17 9.07L3.53 8.36L3.85 7.59L1.98 4.71L4.71 1.98L7.59 3.85L8.36 3.53L9.07 0.17L12.93 0.17L13.64 3.53L14.41 3.85L17.29 1.98L20.02 4.71L18.15 7.59L18.47 8.36z" fill="#2f5396"/><circle cx="11.0" cy="11.0" r="6.16" fill="#2f5396"/><circle cx="11.0" cy="11.0" r="3.08" fill="#fff"/></svg>
<svg style="left:999.0px;top:754.0px" width="16" height="9" viewBox="0 0 16 9"><path d="M1 8L8.0 1L15 8" fill="none" stroke="#666" stroke-width="2.7"/></svg>
<div style="left:999.5px;top:773.4px;width:12.5px;height:52.10000000000002px;background:#bdbdbd;border-radius:6.25px"></div>
<svg style="left:999.0px;top:850.8px" width="16" height="9" viewBox="0 0 16 9"><path d="M1 1L8.0 8L15 1" fill="none" stroke="#666" stroke-width="2.7"/></svg>
<svg style="left:696.0px;top:814.5px" width="19" height="19" viewBox="0 0 19 19"><path d="M0.8 0.8h17.4v17.4H0.8z" fill="#fff" stroke="#8e8e8e" stroke-width="1.6"/><path d="M5 4h9l-1.8 3.2v4.6l1.8 3.2H5l1.8-3.2V7.2z" fill="#f99d32"/></svg>
<div style="left:453px;top:745px;width:544px;height:120px;overflow:hidden">
<div class="t" style="left:22.2px;top:111.5px;color:#1c1c24;">Reference name:</div>
<div class="t" style="left:238.0px;top:111.5px;color:#1c1c24;">LUT1</div>
</div>
<svg style="left:943.8px;top:879.2px" width="9" height="16" viewBox="0 0 9 16"><path d="M8.5 0.5V15.5L0.8 8.0z" fill="none" stroke="#888" stroke-width="1.3"/></svg>
<svg style="left:970.5px;top:879.2px" width="9" height="16" viewBox="0 0 9 16"><path d="M0 0V16L9 8.0z" fill="#555"/></svg>
<svg style="left:992.7px;top:880.8px" width="14" height="16" viewBox="0 0 14 16"><path d="M0 2h14M0 8h14M0 14h14" stroke="#777" stroke-width="2.6"/></svg>
<svg style="left:1257.7px;top:223.0px" width="12" height="12" viewBox="0 0 12 12"><path d="M0.5 0.5L11.5 11.5M11.5 0.5L0.5 11.5" stroke="#8c8c8c" stroke-width="2"/></svg>
<svg style="left:1392.0px;top:223.0px" width="12" height="12" viewBox="0 0 12 12"><path d="M0.5 0.5L11.5 11.5M11.5 0.5L0.5 11.5" stroke="#8c8c8c" stroke-width="2"/></svg>
<svg style="left:1912.6px;top:219.2px" width="14" height="16.5" viewBox="0 0 14 16.5"><path d="M1.8 5.2C1.8 2.6 4 1.2 7 1.2s5.2 1.5 5.2 4c0 2.8-3.6 3.2-3.6 6v0.6" fill="none" stroke="#8c8c8c" stroke-width="2.8"/><path d="M6.4 13.3h3.3v3.2H6.4z" fill="#8c8c8c"/></svg>
<svg style="left:1943.4px;top:219.0px" width="16" height="16" viewBox="0 0 16 16"><path d="M1.2 1.2h13.6v13.6h-13.6z" fill="none" stroke="#8c8c8c" stroke-width="2.4"/></svg>
<svg style="left:1975.1px;top:219.0px" width="16" height="16" viewBox="0 0 16 16"><path d="M7 1.2H1.2v13.6h13.6V9" fill="none" stroke="#8c8c8c" stroke-width="2.4"/><path d="M8 8L15 1M10 1h5v5" fill="none" stroke="#8c8c8c" stroke-width="2"/></svg>
<svg style="left:1063.2px;top:266.0px" width="22" height="17" viewBox="0 0 22 17"><path d="M0 8.5L9 0v5h13v7H9v5z" fill="#2f5396"/></svg>
<svg style="left:1117.7px;top:266.0px" width="22" height="17" viewBox="0 0 22 17"><path d="M22 8.5L13 0v5H0v7h13v5z" fill="#bcbcbc"/></svg>
<svg style="left:1174.1px;top:263.0px" width="22" height="22" viewBox="0 0 22 22"><circle cx="9" cy="9" r="7.5" fill="none" stroke="#2f5396" stroke-width="2.4"/><path d="M14.5 14.5L21 21" stroke="#2f5396" stroke-width="3"/><path d="M5 9h8" stroke="#2f5396" stroke-width="2.2"/><path d="M9 5v8" stroke="#2f5396" stroke-width="2.2"/></svg>
<svg style="left:1229.7px;top:263.0px" width="22" height="22" viewBox="0 0 22 22"><circle cx="9" cy="9" r="7.5" fill="none" stroke="#2f5396" stroke-width="2.4"/><path d="M14.5 14.5L21 21" stroke="#2f5396" stroke-width="3"/><path d="M5 9h8" stroke="#2f5396" stroke-width="2.2"/></svg>
<svg style="left:1284.7px;top:263.0px" width="22" height="22" viewBox="0 0 22 22"><path d="M1 1h6l-6 6zM21 1h-6l6 6zM1 21h6l-6-6zM21 21h-6l6-6z" fill="#2f5396"/><path d="M3 3l5 5M19 3l-5 5M3 19l5-5M19 19l-5-5" stroke="#2f5396" stroke-width="2.2"/></svg>
<svg style="left:1340.1px;top:263.5px" width="23" height="22" viewBox="0 0 23 22"><path d="M1 6V1h5M17 1h5v5M22 16v5h-5M6 21H1v-5" fill="none" stroke="#2f5396" stroke-width="1.8"/><path d="M7 5l3 12l2.5-4l4 4l1.5-1.5l-4-4l4.5-2z" fill="#fff" stroke="#2f5396" stroke-width="1.3"/></svg>
<div style="position:absolute;left:1388px;top:255.8px;width:37.5px;height:36.5px;background:#ececec;border:1.5px solid #b0b0b0;border-radius:2px"></div>
<svg style="left:1396.2px;top:263.1px" width="22" height="22" viewBox="0 0 22 22"><circle cx="11" cy="11" r="8.5" fill="none" stroke="#2f5396" stroke-width="1.6"/><path d="M9.5 1h3v3h-3zM9.5 18h3v3h-3zM1 9.5h3v3H1zM18 9.5h3v3h-3z" fill="#2f5396"/></svg>
<svg style="left:1451.4px;top:263.5px" width="22" height="22" viewBox="0 0 22 22"><path d="M1 1h4v4H1zM8 1h4v4H8zM17 1h4v4h-4zM1 17h4v4H1zM8 17h4v4H8zM17 17h4v4h-4z" fill="#2f5396"/><path d="M4 8h7v7H4v5M19 5v12" fill="none" stroke="#3db233" stroke-width="1.5"/></svg>
<svg style="left:1506.5px;top:263.5px" width="23" height="22" viewBox="0 0 23 22"><path d="M2 22V2h6c4 0 6 2 6 5s-2 5-6 5H2" fill="none" stroke="#2f5396" stroke-width="2.6"/><circle cx="16.5" cy="15.5" r="6" fill="#3db233"/><path d="M16.5 12v7M13 15.5h7" stroke="#fff" stroke-width="2"/></svg>
<svg style="left:1562.6px;top:263.0px" width="22" height="22" viewBox="0 0 22 22"><path d="M1 1h20v20H1z" fill="none" stroke="#2f5396" stroke-width="2"/><path d="M4.5 4.5h13v13h-13z" fill="none" stroke="#2f5396" stroke-width="1.3"/><path d="M8 8h6v6H8z" fill="#2f5396"/></svg>
<svg style="left:1582.8px;top:283.7px" width="8" height="8" viewBox="0 0 8 8"><path d="M8 0V8H0z" fill="#444"/></svg>
<svg style="left:1618.0px;top:263.0px" width="20" height="22" viewBox="0 0 20 22"><path d="M1.5 6h11v11h-11z" fill="none" stroke="#2f5396" stroke-width="2.2"/><path d="M14 8L19 2M14 15l5 5" stroke="#3db233" stroke-width="2"/><path d="M15 1h5v5zM15 21h5v-5z" fill="#3db233"/></svg>
<svg style="left:1638.5px;top:283.7px" width="8" height="8" viewBox="0 0 8 8"><path d="M8 0V8H0z" fill="#444"/></svg>
<div style="left:1101.6px;top:259px;width:1px;height:31px;background:#d4d4d4"></div>
<div style="left:1157.2px;top:259px;width:1px;height:31px;background:#d4d4d4"></div>
<div style="left:1212.6px;top:259px;width:1px;height:31px;background:#d4d4d4"></div>
<div style="left:1268.3px;top:259px;width:1px;height:31px;background:#d4d4d4"></div>
<div style="left:1323.6px;top:259px;width:1px;height:31px;background:#d4d4d4"></div>
<div style="left:1379.3px;top:259px;width:1px;height:31px;background:#d4d4d4"></div>
<div style="left:1434.6px;top:259px;width:1px;height:31px;background:#d4d4d4"></div>
<div style="left:1490.2px;top:259px;width:1px;height:31px;background:#d4d4d4"></div>
<div style="left:1545.8px;top:259px;width:1px;height:31px;background:#d4d4d4"></div>
<div style="left:1601.4px;top:259px;width:1px;height:31px;background:#d4d4d4"></div>
<div style="left:1657px;top:259px;width:1px;height:31px;background:#d4d4d4"></div>
<svg style="left:1967.0px;top:263.3px" width="22" height="22" viewBox="0 0 22 22"><path d="M21.83 9.07L21.83 12.93L18.47 13.64L18.15 14.41L20.02 17.29L17.29 20.02L14.41 18.15L13.64 18.47L12.93 21.83L9.07 21.83L8.36 18.47L7.59 18.15L4.71 20.02L1.98 17.29L3.85 14.41L3.53 13.64L0.17 12.93L0.17 9.07L3.53 8.36L3.85 7.59L1.98 4.71L4.71 1.98L7.59 3.85L8.36 3.53L9.07 0.17L12.93 0.17L13.64 3.53L14.41 3.85L17.29 1.98L20.02 4.71L18.15 7.59L18.47 8.36z" fill="#2f5396"/><circle cx="11.0" cy="11.0" r="6.16" fill="#2f5396"/><circle cx="11.0" cy="11.0" r="3.08" fill="#fff"/></svg>
<svg style="left:1988.0px;top:311.1px" width="15" height="9" viewBox="0 0 15 9"><path d="M1 8L7.5 1L14 8" fill="none" stroke="#666" stroke-width="2.7"/></svg>
<div style="left:1988.8px;top:754px;width:11.5px;height:53px;background:#bdbdbd;border-radius:5.75px"></div>
<svg style="left:1988.0px;top:871.2px" width="15" height="9" viewBox="0 0 15 9"><path d="M1 1L7.5 8L14 1" fill="none" stroke="#666" stroke-width="2.7"/></svg>
<svg style="left:1054.5px;top:889.5px" width="9" height="15" viewBox="0 0 9 15"><path d="M8 1L1 7.5L8 14" fill="none" stroke="#666" stroke-width="2.7"/></svg>
<div style="left:1150.3px;top:890px;width:53.200000000000045px;height:12px;background:#bdbdbd;border-radius:6.0px"></div>
<svg style="left:1969.1px;top:889.5px" width="9" height="15" viewBox="0 0 9 15"><path d="M1 1L8 7.5L1 14" fill="none" stroke="#666" stroke-width="2.7"/></svg>
<svg style="left:1988.0px;top:890.0px" width="14" height="14" viewBox="0 0 14 14"><path d="M0 0h9L0 9z" fill="#8c8c8c"/><path d="M3 3L13 13" stroke="#8c8c8c" stroke-width="3.5"/></svg>
<svg style="left:1498.7px;top:955.5px" width="12" height="12" viewBox="0 0 12 12"><path d="M0.5 0.5L11.5 11.5M11.5 0.5L0.5 11.5" stroke="#8c8c8c" stroke-width="2"/></svg>
<svg style="left:1881.2px;top:952.8px" width="14" height="16.5" viewBox="0 0 14 16.5"><path d="M1.8 5.2C1.8 2.6 4 1.2 7 1.2s5.2 1.5 5.2 4c0 2.8-3.6 3.2-3.6 6v0.6" fill="none" stroke="#8c8c8c" stroke-width="2.8"/><path d="M6.4 13.3h3.3v3.2H6.4z" fill="#8c8c8c"/></svg>
<svg style="left:1911.0px;top:965.5px" width="16" height="3" viewBox="0 0 16 3"><path d="M0 0h16v3H0z" fill="#8c8c8c"/></svg>
<svg style="left:1942.8px;top:952.5px" width="16" height="16" viewBox="0 0 16 16"><path d="M1.2 1.2h13.6v13.6h-13.6z" fill="none" stroke="#8c8c8c" stroke-width="2.4"/></svg>
<svg style="left:1974.2px;top:952.5px" width="16" height="16" viewBox="0 0 16 16"><path d="M7 1.2H1.2v13.6h13.6V9" fill="none" stroke="#8c8c8c" stroke-width="2.4"/><path d="M8 8L15 1M10 1h5v5" fill="none" stroke="#8c8c8c" stroke-width="2"/></svg>
<svg style="left:469.5px;top:996.0px" width="22" height="22" viewBox="0 0 22 22"><circle cx="9" cy="9" r="7.5" fill="none" stroke="#2f5396" stroke-width="2.4"/><path d="M14.5 14.5L20 20" stroke="#2f5396" stroke-width="3.2"/></svg>
<svg style="left:527.5px;top:997.0px" width="17" height="20" viewBox="0 0 17 20"><path d="M1 0h15L8.5 5z" fill="#2f5396"/><path d="M0 7h17v3H0z" fill="#2f5396"/><path d="M1 20h15L8.5 15z" fill="#2f5396"/></svg>
<svg style="left:582.7px;top:997.0px" width="17" height="20" viewBox="0 0 17 20"><path d="M1 5.5h15L8.5 0z" fill="#2f5396"/><path d="M0 7h17v3H0z" fill="#2f5396"/><path d="M1 14.5h15L8.5 20z" fill="#2f5396"/></svg>
<svg style="left:635.5px;top:995.9px" width="23" height="23" viewBox="0 0 23 23"><circle cx="11.5" cy="11.5" r="11.5" fill="#c4c4c4"/><path d="M10 5h3v8h-3zM10 15h3v3h-3z" fill="#dedede"/></svg>
<div style="left:507.7px;top:992px;width:1px;height:30px;background:#d4d4d4"></div>
<div style="left:563.5px;top:992px;width:1px;height:30px;background:#d4d4d4"></div>
<div style="left:619.5px;top:992px;width:1px;height:30px;background:#d4d4d4"></div>
<div style="left:675.2px;top:992px;width:1px;height:30px;background:#d4d4d4"></div>
<svg style="left:763.0px;top:999.4px" width="8" height="14.5" viewBox="0 0 8 14.5"><path d="M8 0V14.5L0 7.25z" fill="#000"/></svg>
<svg style="left:763.0px;top:1023.2px" width="8" height="14.5" viewBox="0 0 8 14.5"><path d="M0 0V14.5L8 7.25z" fill="#000"/></svg>
<svg style="left:470.0px;top:1152.0px" width="8" height="14" viewBox="0 0 8 14"><path d="M1 1L7 7.0L1 13" fill="none" stroke="#555" stroke-width="1.6"/></svg>
<svg style="left:486.8px;top:1150.5px" width="19" height="16" viewBox="0 0 19 16"><path d="M0.5 1.5h6l2 2h9v12h-17z" fill="#f4f4f4" stroke="#c9c9c9"/><path d="M0.5 6h17v9.5h-17z" fill="#e6e6e6" stroke="#c9c9c9"/><circle cx="15" cy="12.5" r="4" fill="#f08a1c"/></svg>
<svg style="left:1987.5px;top:1045.1px" width="15" height="9" viewBox="0 0 15 9"><path d="M1 8L7.5 1L14 8" fill="none" stroke="#666" stroke-width="2.7"/></svg>
<div style="left:1988.7px;top:1064px;width:12px;height:160.5px;background:#bdbdbd;border-radius:6.0px"></div>
<svg style="left:1987.5px;top:1263.7px" width="15" height="9" viewBox="0 0 15 9"><path d="M1 1L7.5 8L14 1" fill="none" stroke="#666" stroke-width="2.7"/></svg>
<svg style="left:783.5px;top:1283.5px" width="9" height="15" viewBox="0 0 9 15"><path d="M8 1L1 7.5L8 14" fill="none" stroke="#666" stroke-width="2.7"/></svg>
<div style="left:802.5px;top:1284.2px;width:1077.5px;height:11.5px;background:#bdbdbd;border-radius:5.75px"></div>
<svg style="left:1968.0px;top:1283.5px" width="9" height="15" viewBox="0 0 9 15"><path d="M1 1L8 7.5L1 14" fill="none" stroke="#666" stroke-width="2.7"/></svg>
<div style="left:777px;top:1036px;width:1206px;height:243px;overflow:hidden">
<div class="t b" style="left:21.4px;top:236.0px;color:#111;">There are no user specified timing constraints.</div>
</div>
<div style="position:absolute;left:2003.5px;top:1363px;width:22.5px;height:22px;background:#fff"></div>
<svg style="left:2008.0px;top:1368.0px" width="16" height="16" viewBox="0 0 16 16"><path d="M15 3L3 15M15 8L8 15M15 12L12 15" stroke="#a6a6a6" stroke-width="1.2"/></svg>
</body></html>
